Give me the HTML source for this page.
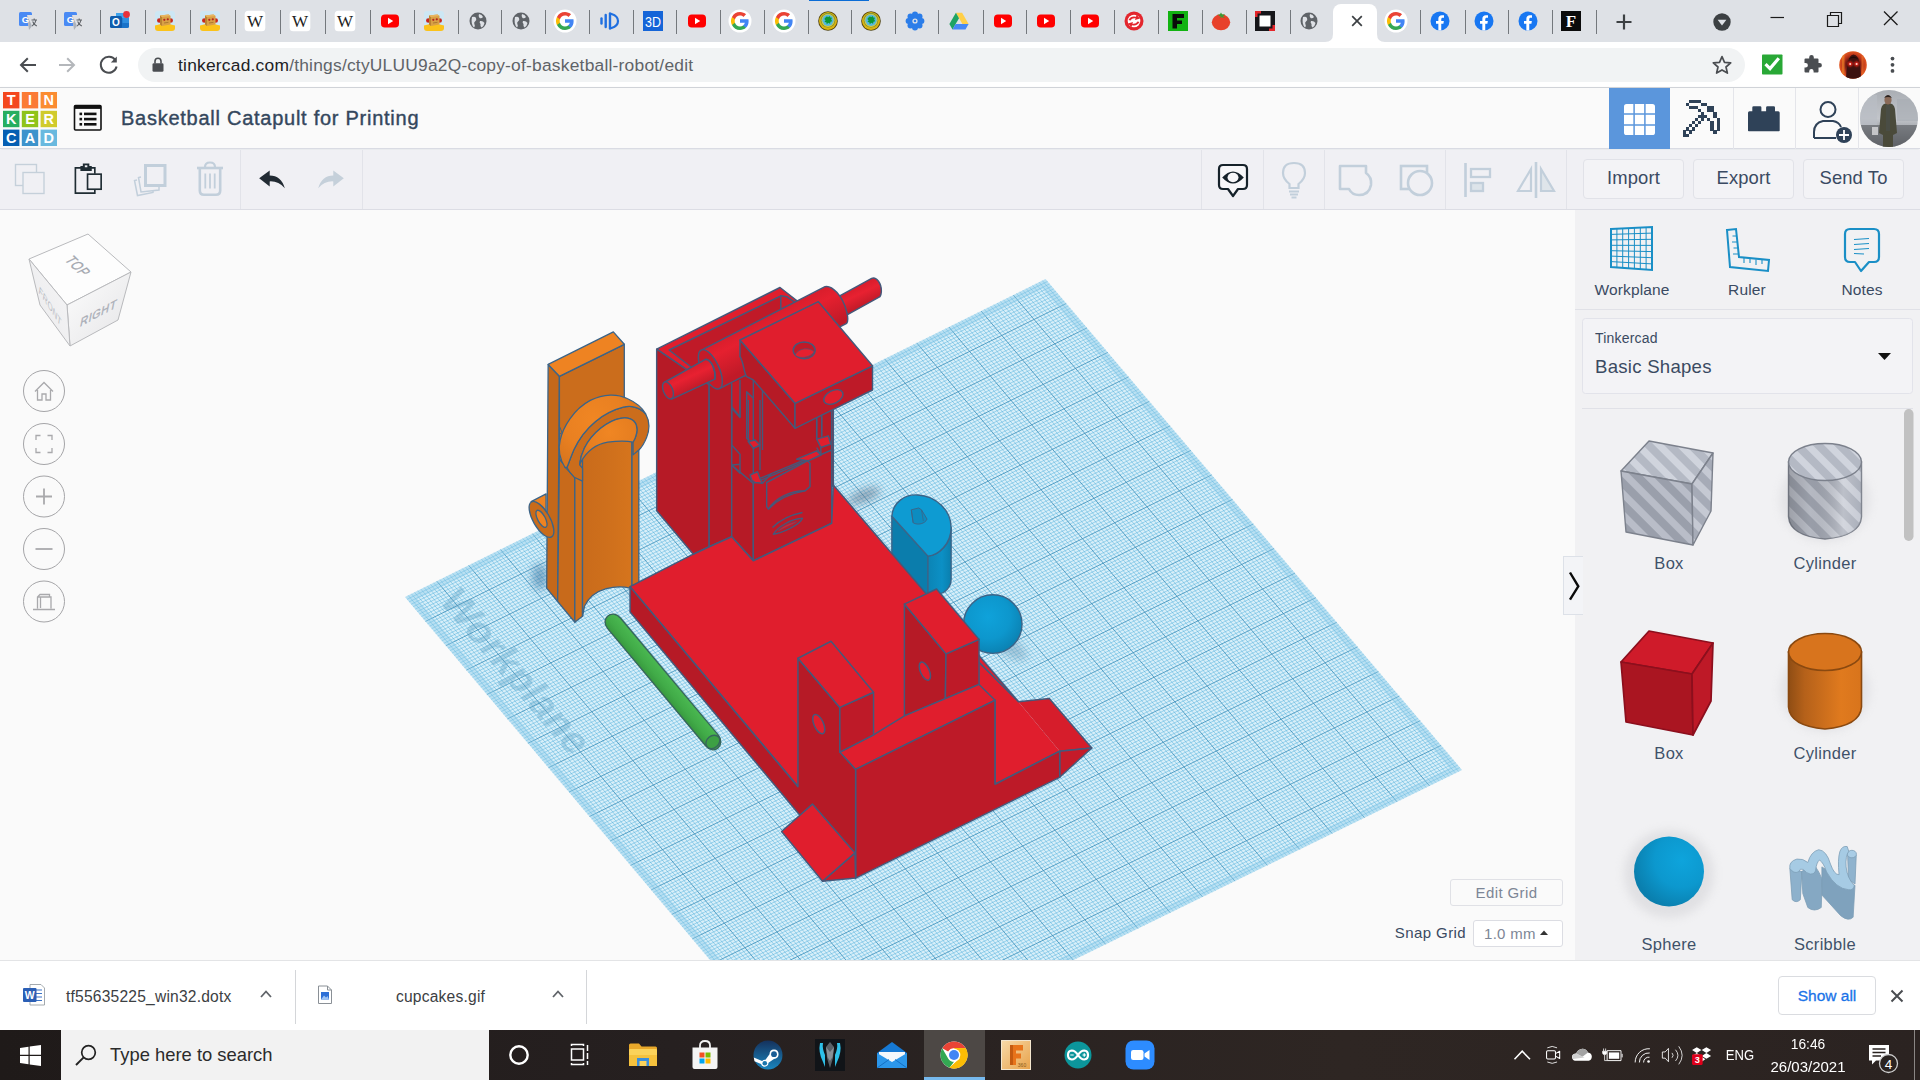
<!DOCTYPE html>
<html lang="en">
<head>
<meta charset="utf-8">
<title>Basketball Catapult for Printing | Tinkercad</title>
<style>
*{box-sizing:border-box;margin:0;padding:0}
html,body{width:1920px;height:1080px;overflow:hidden;background:#fff;font-family:"Liberation Sans",sans-serif}
.abs{position:absolute}
#root{position:relative;width:1920px;height:1080px;overflow:hidden}
/* ---------- chrome tab strip ---------- */
#tabs{left:0;top:0;width:1920px;height:42px;background:#dee1e6}
#tabs:before{content:"";position:absolute;left:809px;top:0;width:60px;height:1px;background:#0a6cd6}
.fav{position:absolute;top:11px;width:20px;height:20px}
.tsep{position:absolute;top:9.5px;width:1.2px;height:24px;background:#74787d}
#acttab{left:1333px;top:4px;width:44px;height:38px;background:#fff;border-radius:8px 8px 0 0}
/* ---------- chrome toolbar ---------- */
#nav{left:0;top:42px;width:1920px;height:46px;background:#fff;border-bottom:1px solid #d5d7db}
#omni{left:138px;top:5.5px;width:1607px;height:34px;border-radius:17px;background:#f1f3f4}
#url{left:40px;top:6px;font-size:17.4px;line-height:22px;color:#5f6368;white-space:nowrap;letter-spacing:.22px}
#url b{font-weight:400;color:#202124}
/* ---------- tinkercad header ---------- */
#tkh{left:0;top:88px;width:1920px;height:61px;background:#fafafa;border-bottom:1px solid #d9dbe3;box-shadow:0 1px 3px rgba(60,70,100,.18)}
#title{left:121px;top:17px;font-size:20px;line-height:26px;color:#34475d;white-space:nowrap;letter-spacing:.74px;-webkit-text-stroke:.4px #34475d}
.hsep{position:absolute;top:0;width:1px;height:61px;background:#e4e5ea}
/* ---------- tinkercad toolbar ---------- */
#tkt{left:0;top:150px;width:1920px;height:60px;background:#f0f0f4;border-bottom:1px solid #dcdde4}
.vsep{position:absolute;top:0;width:1px;height:59px;background:#e2e3e9}
.tbtn{position:absolute;top:9px;height:40px;width:101px;border:1px solid #e1e2e8;border-radius:4px;background:#f3f3f6;color:#3a4a62;font-size:18.4px;line-height:35px;text-align:center;letter-spacing:.12px}
/* ---------- canvas ---------- */
#canvas{left:0;top:210px;width:1575px;height:750px;background:#fafafa;overflow:hidden}
/* ---------- side panel ---------- */
#side{left:1575px;top:210px;width:345px;height:750px;background:#f1f1f3}
.lbl{position:absolute;width:140px;text-align:center;font-size:15.5px;line-height:20px;color:#3a4a62;letter-spacing:.15px}
.slbl{position:absolute;width:140px;text-align:center;font-size:16.5px;line-height:20px;color:#3f5169;letter-spacing:.3px}
/* ---------- downloads bar ---------- */
#dl{left:0;top:960px;width:1920px;height:70px;background:#fff;border-top:1px solid #e3e4e6}
.dlt{position:absolute;top:26px;font-size:15.6px;line-height:20px;color:#3c4043;white-space:nowrap;letter-spacing:.2px}
.dsep{position:absolute;top:9px;width:1px;height:54px;background:#d4d6d9}
/* ---------- taskbar ---------- */
#tb{left:0;top:1030px;width:1920px;height:50px;background:linear-gradient(90deg,#1f1a19 0%,#262020 35%,#2e2623 70%,#2b2321 100%)}
#search{left:61px;top:0;width:428px;height:50px;background:#f2f2f2}
#search span{position:absolute;left:49px;top:13px;font-size:18.4px;line-height:24px;color:#2b2b2b;white-space:nowrap}
.tray{position:absolute;color:#fff;font-size:15px;line-height:18px;white-space:nowrap;text-align:center}
</style>
</head>
<body>
<div id="root">

<!-- TABSTRIP -->
<div id="tabs" class="abs">
<div class="tsep" style="left:55.0px"></div>
<div class="tsep" style="left:100.0px"></div>
<div class="tsep" style="left:145.0px"></div>
<div class="tsep" style="left:190.0px"></div>
<div class="tsep" style="left:235.0px"></div>
<div class="tsep" style="left:280.0px"></div>
<div class="tsep" style="left:325.0px"></div>
<div class="tsep" style="left:370.0px"></div>
<div class="tsep" style="left:414.0px"></div>
<div class="tsep" style="left:458.0px"></div>
<div class="tsep" style="left:501.0px"></div>
<div class="tsep" style="left:545.0px"></div>
<div class="tsep" style="left:589.0px"></div>
<div class="tsep" style="left:633.0px"></div>
<div class="tsep" style="left:676.0px"></div>
<div class="tsep" style="left:720.0px"></div>
<div class="tsep" style="left:764.0px"></div>
<div class="tsep" style="left:808.0px"></div>
<div class="tsep" style="left:851.0px"></div>
<div class="tsep" style="left:895.0px"></div>
<div class="tsep" style="left:938.0px"></div>
<div class="tsep" style="left:982.5px"></div>
<div class="tsep" style="left:1026.0px"></div>
<div class="tsep" style="left:1070.0px"></div>
<div class="tsep" style="left:1114.0px"></div>
<div class="tsep" style="left:1158.0px"></div>
<div class="tsep" style="left:1201.5px"></div>
<div class="tsep" style="left:1245.5px"></div>
<div class="tsep" style="left:1289.5px"></div>
<div class="tsep" style="left:1420.0px"></div>
<div class="tsep" style="left:1464.5px"></div>
<div class="tsep" style="left:1508.0px"></div>
<div class="tsep" style="left:1551.5px"></div>
<div class="tsep" style="left:1595.5px"></div>
<div id="acttab" class="abs"></div>
<svg class="abs" style="left:1325px;top:34px" width="60" height="8" viewBox="0 0 60 8"><path d="M0,8 Q8,8 8,0 V8Z M60,8 Q52,8 52,0 V8Z" fill="#fff"/></svg>
<svg class="abs" style="left:1349px;top:13px" width="16" height="16" viewBox="0 0 16 16"><path d="M3.2,3.2 L12.8,12.8 M12.8,3.2 L3.2,12.8" stroke="#3c4043" stroke-width="1.7" fill="none"/></svg>
<svg class="abs" style="left:19.0px;top:11.0px" width="20" height="20" viewBox="0 0 20 20" overflow="visible"><rect x="0" y="1" width="13" height="14" rx="1.5" fill="#4a8af4"/><path d="M8,4 L19,4 Q20,4 20,5 L20,18 Q20,19 19,19 L10,19Z" fill="#dfe1e5"/><path d="M8,4 L13,15 L10,19Z" fill="#aeb3bb"/><text x="6.5" y="12" font-size="9.5" font-weight="700" font-family="Liberation Sans,sans-serif" fill="#fff" text-anchor="middle">G</text><path d="M12.5,9 H18 M15.2,7.5 V9 M13.2,15 Q16.5,12.5 17,9 M13.6,10.5 Q15,13.5 17.8,15" stroke="#5f6368" stroke-width="1.1" fill="none"/></svg>
<svg class="abs" style="left:64.0px;top:11.0px" width="20" height="20" viewBox="0 0 20 20" overflow="visible"><rect x="0" y="1" width="13" height="14" rx="1.5" fill="#4a8af4"/><path d="M8,4 L19,4 Q20,4 20,5 L20,18 Q20,19 19,19 L10,19Z" fill="#dfe1e5"/><path d="M8,4 L13,15 L10,19Z" fill="#aeb3bb"/><text x="6.5" y="12" font-size="9.5" font-weight="700" font-family="Liberation Sans,sans-serif" fill="#fff" text-anchor="middle">G</text><path d="M12.5,9 H18 M15.2,7.5 V9 M13.2,15 Q16.5,12.5 17,9 M13.6,10.5 Q15,13.5 17.8,15" stroke="#5f6368" stroke-width="1.1" fill="none"/></svg>
<svg class="abs" style="left:110.0px;top:11.0px" width="20" height="20" viewBox="0 0 20 20" overflow="visible"><rect x="6" y="2" width="13" height="15" rx="1.5" fill="#1a73c9"/><rect x="6" y="2" width="13" height="5" fill="#3fa3ec"/><rect x="12.5" y="7" width="6.5" height="5" fill="#2f8fe0"/><rect x="0" y="5" width="12" height="12" rx="1.5" fill="#0f5cad"/><text x="6" y="14.6" font-size="10" font-weight="700" font-family="Liberation Sans,sans-serif" fill="#fff" text-anchor="middle">O</text><circle cx="16.5" cy="3.5" r="3.4" fill="#e8303a"/></svg>
<svg class="abs" style="left:155.0px;top:11.0px" width="20" height="20" viewBox="0 0 20 20" overflow="visible"><rect x="0" y="0" width="20" height="20" rx="3" fill="#cde7f4"/><path d="M0,14.500 Q10,11 20,14.500 V17 Q20,20 17,20 H3 Q0,20 0,17Z" fill="#fbc21a"/><circle cx="4.300" cy="9.500" r="2.300" fill="#c8281e"/><circle cx="15.700" cy="9.500" r="2.300" fill="#c8281e"/><path d="M5,4.500 L13.500,3.500 L15.500,5 L15.500,13.500 L7,15 L5,13.500Z" fill="#d9a046"/><path d="M5,4.500 L7,6 L7,15 L5,13.500Z" fill="#b98232"/><path d="M5,4.500 L13.500,3.500 L15.500,5 L7,6Z" fill="#e8b660"/><circle cx="9.300" cy="8.800" r="1.100" fill="#b3261e"/><circle cx="12.800" cy="8.300" r="1.100" fill="#b3261e"/><path d="M9,12 L13.500,11.300" stroke="#9a6a28" stroke-width=".7"/></svg>
<svg class="abs" style="left:200.0px;top:11.0px" width="20" height="20" viewBox="0 0 20 20" overflow="visible"><rect x="0" y="0" width="20" height="20" rx="3" fill="#cde7f4"/><path d="M0,14.500 Q10,11 20,14.500 V17 Q20,20 17,20 H3 Q0,20 0,17Z" fill="#fbc21a"/><circle cx="4.300" cy="9.500" r="2.300" fill="#c8281e"/><circle cx="15.700" cy="9.500" r="2.300" fill="#c8281e"/><path d="M5,4.500 L13.500,3.500 L15.500,5 L15.500,13.500 L7,15 L5,13.500Z" fill="#d9a046"/><path d="M5,4.500 L7,6 L7,15 L5,13.500Z" fill="#b98232"/><path d="M5,4.500 L13.500,3.500 L15.500,5 L7,6Z" fill="#e8b660"/><circle cx="9.300" cy="8.800" r="1.100" fill="#b3261e"/><circle cx="12.800" cy="8.300" r="1.100" fill="#b3261e"/><path d="M9,12 L13.500,11.300" stroke="#9a6a28" stroke-width=".7"/></svg>
<svg class="abs" style="left:245.0px;top:11.0px" width="20" height="20" viewBox="0 0 20 20" overflow="visible"><rect x="-.3" y="-.3" width="20.600" height="20.600" rx="3.500" fill="#fff"/><text x="10" y="16" font-size="17" font-family="Liberation Serif,serif" fill="#222" text-anchor="middle">W</text></svg>
<svg class="abs" style="left:290.0px;top:11.0px" width="20" height="20" viewBox="0 0 20 20" overflow="visible"><rect x="-.3" y="-.3" width="20.600" height="20.600" rx="3.500" fill="#fff"/><text x="10" y="16" font-size="17" font-family="Liberation Serif,serif" fill="#222" text-anchor="middle">W</text></svg>
<svg class="abs" style="left:334.5px;top:11.0px" width="20" height="20" viewBox="0 0 20 20" overflow="visible"><rect x="-.3" y="-.3" width="20.600" height="20.600" rx="3.500" fill="#fff"/><text x="10" y="16" font-size="17" font-family="Liberation Serif,serif" fill="#222" text-anchor="middle">W</text></svg>
<svg class="abs" style="left:380.0px;top:11.0px" width="20" height="20" viewBox="0 0 20 20" overflow="visible"><rect x="1" y="3.5" width="18" height="13" rx="3.8" fill="#f00"/><path d="M8,6.8 L13.2,10 L8,13.2Z" fill="#fff"/></svg>
<svg class="abs" style="left:424.0px;top:11.0px" width="20" height="20" viewBox="0 0 20 20" overflow="visible"><rect x="0" y="0" width="20" height="20" rx="3" fill="#cde7f4"/><path d="M0,14.500 Q10,11 20,14.500 V17 Q20,20 17,20 H3 Q0,20 0,17Z" fill="#fbc21a"/><circle cx="4.300" cy="9.500" r="2.300" fill="#c8281e"/><circle cx="15.700" cy="9.500" r="2.300" fill="#c8281e"/><path d="M5,4.500 L13.500,3.500 L15.500,5 L15.500,13.500 L7,15 L5,13.500Z" fill="#d9a046"/><path d="M5,4.500 L7,6 L7,15 L5,13.500Z" fill="#b98232"/><path d="M5,4.500 L13.500,3.500 L15.500,5 L7,6Z" fill="#e8b660"/><circle cx="9.300" cy="8.800" r="1.100" fill="#b3261e"/><circle cx="12.800" cy="8.300" r="1.100" fill="#b3261e"/><path d="M9,12 L13.500,11.300" stroke="#9a6a28" stroke-width=".7"/></svg>
<svg class="abs" style="left:468.0px;top:11.0px" width="20" height="20" viewBox="0 0 20 20" overflow="visible"><circle cx="10" cy="10" r="8.5" fill="#5f6368"/><path d="M4,6 Q7,5 8,7 Q9,9 7,10.5 Q5.5,11.5 6.5,13.5 Q7.5,15 6,16.5 Q2.5,13 4,6Z M11,3 Q14,3.5 15,6 Q13.5,8 11.5,7 Q10,5 11,3Z M12,10 Q15,9.5 16.5,12 Q16,15 13.5,16.5 Q12,15 12.5,13 Q11,11.5 12,10Z" fill="#dee1e6"/></svg>
<svg class="abs" style="left:511.0px;top:11.0px" width="20" height="20" viewBox="0 0 20 20" overflow="visible"><circle cx="10" cy="10" r="8.5" fill="#5f6368"/><path d="M4,6 Q7,5 8,7 Q9,9 7,10.5 Q5.5,11.5 6.5,13.5 Q7.5,15 6,16.5 Q2.5,13 4,6Z M11,3 Q14,3.5 15,6 Q13.5,8 11.5,7 Q10,5 11,3Z M12,10 Q15,9.5 16.5,12 Q16,15 13.5,16.5 Q12,15 12.5,13 Q11,11.5 12,10Z" fill="#dee1e6"/></svg>
<svg class="abs" style="left:555.0px;top:11.0px" width="20" height="20" viewBox="0 0 20 20" overflow="visible"><circle cx="10" cy="10" r="11.500" fill="#fff"/><path d="M18.6,10.2 c0,-.65 -.06,-1.25 -.17,-1.85 H10 v3.5 h4.84 a4.14,4.14 0 0 1 -1.8,2.72 v2.26 h2.9 c1.7,-1.57 2.68,-3.87 2.68,-6.63z" fill="#4285f4"/><path d="M10,19 c2.43,0 4.47,-.8 5.96,-2.18 l-2.9,-2.26 c-.8,.54 -1.84,.86 -3.06,.86 -2.34,0 -4.33,-1.58 -5.04,-3.7 H1.96 v2.33 A9,9 0 0 0 10,19z" fill="#34a853"/><path d="M4.96,11.71 a5.41,5.41 0 0 1 0,-3.42 V5.96 H1.96 a9,9 0 0 0 0,8.08 l3,-2.33z" fill="#fbbc05"/><path d="M10,4.58 c1.32,0 2.5,.45 3.44,1.35 l2.58,-2.58 C14.46,1.89 12.43,1 10,1 A9,9 0 0 0 1.96,5.96 l3,2.33 C5.67,6.16 7.66,4.58 10,4.58z" fill="#ea4335"/></svg>
<svg class="abs" style="left:598.5px;top:11.0px" width="20" height="20" viewBox="0 0 20 20" overflow="visible"><g stroke="#1f6fe0" stroke-linecap="round" fill="none"><path d="M2.5,7.5 V12.5" stroke-width="2.4"/><path d="M6.7,4 V16" stroke-width="2.4"/><path d="M11,2.5 V17.5" stroke-width="2.4"/><path d="M12.5,3 Q19,5 19,10 Q19,15 12.5,17" stroke-width="2.2"/></g></svg>
<svg class="abs" style="left:642.5px;top:11.0px" width="20" height="20" viewBox="0 0 20 20" overflow="visible"><rect x="0" y="0" width="20" height="20" fill="#1565d8"/><text x="10" y="15.6" font-size="14.5" font-family="Liberation Sans,sans-serif" fill="#fff" text-anchor="middle" textLength="16" lengthAdjust="spacingAndGlyphs">3D</text></svg>
<svg class="abs" style="left:686.5px;top:11.0px" width="20" height="20" viewBox="0 0 20 20" overflow="visible"><rect x="1" y="3.5" width="18" height="13" rx="3.8" fill="#f00"/><path d="M8,6.8 L13.2,10 L8,13.2Z" fill="#fff"/></svg>
<svg class="abs" style="left:730.0px;top:11.0px" width="20" height="20" viewBox="0 0 20 20" overflow="visible"><circle cx="10" cy="10" r="11.500" fill="#fff"/><path d="M18.6,10.2 c0,-.65 -.06,-1.25 -.17,-1.85 H10 v3.5 h4.84 a4.14,4.14 0 0 1 -1.8,2.72 v2.26 h2.9 c1.7,-1.57 2.68,-3.87 2.68,-6.63z" fill="#4285f4"/><path d="M10,19 c2.43,0 4.47,-.8 5.96,-2.18 l-2.9,-2.26 c-.8,.54 -1.84,.86 -3.06,.86 -2.34,0 -4.33,-1.58 -5.04,-3.7 H1.96 v2.33 A9,9 0 0 0 10,19z" fill="#34a853"/><path d="M4.96,11.71 a5.41,5.41 0 0 1 0,-3.42 V5.96 H1.96 a9,9 0 0 0 0,8.08 l3,-2.33z" fill="#fbbc05"/><path d="M10,4.58 c1.32,0 2.5,.45 3.44,1.35 l2.58,-2.58 C14.46,1.89 12.43,1 10,1 A9,9 0 0 0 1.96,5.96 l3,2.33 C5.67,6.16 7.66,4.58 10,4.58z" fill="#ea4335"/></svg>
<svg class="abs" style="left:774.0px;top:11.0px" width="20" height="20" viewBox="0 0 20 20" overflow="visible"><circle cx="10" cy="10" r="11.500" fill="#fff"/><path d="M18.6,10.2 c0,-.65 -.06,-1.25 -.17,-1.85 H10 v3.5 h4.84 a4.14,4.14 0 0 1 -1.8,2.72 v2.26 h2.9 c1.7,-1.57 2.68,-3.87 2.68,-6.63z" fill="#4285f4"/><path d="M10,19 c2.43,0 4.47,-.8 5.96,-2.18 l-2.9,-2.26 c-.8,.54 -1.84,.86 -3.06,.86 -2.34,0 -4.33,-1.58 -5.04,-3.7 H1.96 v2.33 A9,9 0 0 0 10,19z" fill="#34a853"/><path d="M4.96,11.71 a5.41,5.41 0 0 1 0,-3.42 V5.96 H1.96 a9,9 0 0 0 0,8.08 l3,-2.33z" fill="#fbbc05"/><path d="M10,4.58 c1.32,0 2.5,.45 3.44,1.35 l2.58,-2.58 C14.46,1.89 12.43,1 10,1 A9,9 0 0 0 1.96,5.96 l3,2.33 C5.67,6.16 7.66,4.58 10,4.58z" fill="#ea4335"/></svg>
<svg class="abs" style="left:817.5px;top:11.0px" width="20" height="20" viewBox="0 0 20 20" overflow="visible"><circle cx="10" cy="10" r="9.800" fill="#4e4210"/><circle cx="10" cy="10" r="9" fill="#dbb30f"/><circle cx="10" cy="9.300" r="7.300" fill="#6f8f3a"/><circle cx="10" cy="9.300" r="6.600" fill="#e3c93a"/><circle cx="10" cy="9.300" r="5.700" fill="#55b9dd"/><path d="M7.500,6.500 L9,5.200 L10,6.300 L11.500,5 L12.300,6.600 L14,6.800 L13.200,8.500 L14.200,10.200 L12.500,10.800 L12,12.800 L10.300,11.800 L8.800,13.200 L8.300,11.200 L6.500,11 L7.600,9.300 L6.300,8Z" fill="#0a9638"/></svg>
<svg class="abs" style="left:861.0px;top:11.0px" width="20" height="20" viewBox="0 0 20 20" overflow="visible"><circle cx="10" cy="10" r="9.800" fill="#4e4210"/><circle cx="10" cy="10" r="9" fill="#dbb30f"/><circle cx="10" cy="9.300" r="7.300" fill="#6f8f3a"/><circle cx="10" cy="9.300" r="6.600" fill="#e3c93a"/><circle cx="10" cy="9.300" r="5.700" fill="#55b9dd"/><path d="M7.500,6.500 L9,5.200 L10,6.300 L11.500,5 L12.300,6.600 L14,6.800 L13.200,8.500 L14.200,10.200 L12.500,10.800 L12,12.800 L10.300,11.800 L8.800,13.200 L8.300,11.200 L6.500,11 L7.600,9.300 L6.300,8Z" fill="#0a9638"/></svg>
<svg class="abs" style="left:905.0px;top:11.0px" width="20" height="20" viewBox="0 0 20 20" overflow="visible"><g fill="#2b7de9"><circle cx="10" cy="3.6" r="3"/><circle cx="10" cy="16.4" r="3"/><circle cx="3.6" cy="10" r="3"/><circle cx="16.4" cy="10" r="3"/><circle cx="5.5" cy="5.5" r="3"/><circle cx="14.5" cy="5.5" r="3"/><circle cx="5.5" cy="14.5" r="3"/><circle cx="14.5" cy="14.5" r="3"/><circle cx="10" cy="10" r="5"/></g><circle cx="10" cy="10" r="2.6" fill="#dee1e6"/><circle cx="10" cy="10" r="1.3" fill="#2b7de9"/></svg>
<svg class="abs" style="left:949.0px;top:11.0px" width="20" height="20" viewBox="0 0 20 20" overflow="visible"><path d="M6.9,1.8 H13.1 L19.6,13 H13.4Z" fill="#ffcf48"/><path d="M6.9,1.8 L10,7.2 L3.5,18.4 L0.4,13Z" fill="#1ea362"/><path d="M6.6,13 H19.6 L16.5,18.4 H3.5Z" fill="#4688f4"/></svg>
<svg class="abs" style="left:993.0px;top:11.0px" width="20" height="20" viewBox="0 0 20 20" overflow="visible"><rect x="1" y="3.5" width="18" height="13" rx="3.8" fill="#f00"/><path d="M8,6.8 L13.2,10 L8,13.2Z" fill="#fff"/></svg>
<svg class="abs" style="left:1036.0px;top:11.0px" width="20" height="20" viewBox="0 0 20 20" overflow="visible"><rect x="1" y="3.5" width="18" height="13" rx="3.8" fill="#f00"/><path d="M8,6.8 L13.2,10 L8,13.2Z" fill="#fff"/></svg>
<svg class="abs" style="left:1080.0px;top:11.0px" width="20" height="20" viewBox="0 0 20 20" overflow="visible"><rect x="1" y="3.5" width="18" height="13" rx="3.8" fill="#f00"/><path d="M8,6.8 L13.2,10 L8,13.2Z" fill="#fff"/></svg>
<svg class="abs" style="left:1124.0px;top:11.0px" width="20" height="20" viewBox="0 0 20 20" overflow="visible"><circle cx="10" cy="10" r="9.5" fill="#e3262e"/><circle cx="10" cy="10" r="6.3" fill="#fff"/><path d="M4.5,9 Q7,4.5 12,5.8 L12.5,3.8 L16,7.6 L11,9 L11.6,7.3 Q8,6.6 6.5,9.6Z M15.5,11 Q13,15.5 8,14.2 L7.5,16.2 L4,12.4 L9,11 L8.4,12.7 Q12,13.4 13.5,10.4Z" fill="#e3262e"/></svg>
<svg class="abs" style="left:1168.0px;top:11.0px" width="20" height="20" viewBox="0 0 20 20" overflow="visible"><rect x="0" y="0" width="20" height="20" fill="#12b312"/><path d="M4.5,3 H16 V7 H9 V9.5 H14 V13 H9 V17.5 H4.5Z" fill="#0a0a0a"/></svg>
<svg class="abs" style="left:1211.0px;top:11.0px" width="20" height="20" viewBox="0 0 20 20" overflow="visible"><ellipse cx="10" cy="11.3" rx="9.2" ry="8" fill="#e8402a"/><path d="M10,5.8 L6.5,3.8 L8.8,3.6 L10,1.5 L11.2,3.6 L14,3.2 L12,5.5 L14.5,7 L10.5,6.2 L8,7.5Z" fill="#3c9b35"/></svg>
<svg class="abs" style="left:1254.5px;top:11.0px" width="20" height="20" viewBox="0 0 20 20" overflow="visible"><rect x="0" y="0" width="20" height="20" fill="#16161a"/><rect x="4.5" y="4.5" width="11" height="11" fill="#fff"/><path d="M0,0 H6 V2.5 H2.5 V6 H0Z M20,20 H14 V17.5 H17.5 V14 H20Z" fill="#e5252a"/><path d="M14,0 H20 V6 H17.5 V2.5 H14Z" fill="#e5252a" opacity=".0"/></svg>
<svg class="abs" style="left:1298.5px;top:11.0px" width="20" height="20" viewBox="0 0 20 20" overflow="visible"><circle cx="10" cy="10" r="8.5" fill="#5f6368"/><path d="M4,6 Q7,5 8,7 Q9,9 7,10.5 Q5.5,11.5 6.5,13.5 Q7.5,15 6,16.5 Q2.5,13 4,6Z M11,3 Q14,3.5 15,6 Q13.5,8 11.5,7 Q10,5 11,3Z M12,10 Q15,9.5 16.5,12 Q16,15 13.5,16.5 Q12,15 12.5,13 Q11,11.5 12,10Z" fill="#dee1e6"/></svg>
<svg class="abs" style="left:1386.0px;top:11.0px" width="20" height="20" viewBox="0 0 20 20" overflow="visible"><circle cx="10" cy="10" r="11.500" fill="#fff"/><path d="M18.6,10.2 c0,-.65 -.06,-1.25 -.17,-1.85 H10 v3.5 h4.84 a4.14,4.14 0 0 1 -1.8,2.72 v2.26 h2.9 c1.7,-1.57 2.68,-3.87 2.68,-6.63z" fill="#4285f4"/><path d="M10,19 c2.43,0 4.47,-.8 5.96,-2.18 l-2.9,-2.26 c-.8,.54 -1.84,.86 -3.06,.86 -2.34,0 -4.33,-1.58 -5.04,-3.7 H1.96 v2.33 A9,9 0 0 0 10,19z" fill="#34a853"/><path d="M4.96,11.71 a5.41,5.41 0 0 1 0,-3.42 V5.96 H1.96 a9,9 0 0 0 0,8.08 l3,-2.33z" fill="#fbbc05"/><path d="M10,4.58 c1.32,0 2.5,.45 3.44,1.35 l2.58,-2.58 C14.46,1.89 12.43,1 10,1 A9,9 0 0 0 1.96,5.96 l3,2.33 C5.67,6.16 7.66,4.58 10,4.58z" fill="#ea4335"/></svg>
<svg class="abs" style="left:1430.0px;top:11.0px" width="20" height="20" viewBox="0 0 20 20" overflow="visible"><circle cx="10" cy="10" r="9.5" fill="#1877f2"/><path d="M13.4,12.7 L13.85,10 H11.25 V8.2 c0,-.78 .38,-1.5 1.56,-1.5 H14 V4.35 s-1.07,-.2 -2.1,-.2 c-2.15,0 -3.55,1.3 -3.55,3.66 V10 H6 v2.7 h2.35 v6.7 a9.6,9.6 0 0 0 2.9,0 V12.7z" fill="#fff"/></svg>
<svg class="abs" style="left:1474.0px;top:11.0px" width="20" height="20" viewBox="0 0 20 20" overflow="visible"><circle cx="10" cy="10" r="9.5" fill="#1877f2"/><path d="M13.4,12.7 L13.85,10 H11.25 V8.2 c0,-.78 .38,-1.5 1.56,-1.5 H14 V4.35 s-1.07,-.2 -2.1,-.2 c-2.15,0 -3.55,1.3 -3.55,3.66 V10 H6 v2.7 h2.35 v6.7 a9.6,9.6 0 0 0 2.9,0 V12.7z" fill="#fff"/></svg>
<svg class="abs" style="left:1517.5px;top:11.0px" width="20" height="20" viewBox="0 0 20 20" overflow="visible"><circle cx="10" cy="10" r="9.5" fill="#1877f2"/><path d="M13.4,12.7 L13.85,10 H11.25 V8.2 c0,-.78 .38,-1.5 1.56,-1.5 H14 V4.35 s-1.07,-.2 -2.1,-.2 c-2.15,0 -3.55,1.3 -3.55,3.66 V10 H6 v2.7 h2.35 v6.7 a9.6,9.6 0 0 0 2.9,0 V12.7z" fill="#fff"/></svg>
<svg class="abs" style="left:1561.0px;top:11.0px" width="20" height="20" viewBox="0 0 20 20" overflow="visible"><rect x="0" y="0" width="20" height="20" fill="#0b0b0b"/><text x="10" y="16.2" font-size="17" font-weight="700" font-family="Liberation Serif,serif" fill="#fff" text-anchor="middle">F</text></svg>
<svg class="abs" style="left:1614px;top:12px" width="20" height="20" viewBox="0 0 20 20"><path d="M10,2.5 V17.5 M2.5,10 H17.5" stroke="#3c4043" stroke-width="2.2" fill="none"/></svg>
<svg class="abs" style="left:1712px;top:12px" width="20" height="20" viewBox="0 0 20 20"><circle cx="10" cy="10" r="8.7" fill="#3c4043"/><path d="M5.6,7.8 H14.4 L10,13.4Z" fill="#dee1e6"/></svg>
<svg class="abs" style="left:1760px;top:0" width="160" height="42" viewBox="0 0 160 42"><path d="M10.5,17.5 H24" stroke="#1b1b1b" stroke-width="1.2"/><path d="M67.5,15.5 H78.5 V26.5 H67.5Z M70.5,15.5 V12.5 H81.5 V23.5 H78.5" stroke="#1b1b1b" stroke-width="1.2" fill="none"/><path d="M124,11.5 L137.5,25 M137.5,11.5 L124,25" stroke="#1b1b1b" stroke-width="1.3" fill="none"/></svg>
</div>

<!-- NAVBAR -->
<div id="nav" class="abs">
<!-- back -->
<svg class="abs" style="left:17px;top:12px" width="22" height="22" viewBox="0 0 22 22"><path d="M19,11 H4.5 M10.8,4.2 L4,11 L10.8,17.8" stroke="#4a4d51" stroke-width="2" fill="none"/></svg>
<svg class="abs" style="left:56px;top:12px" width="22" height="22" viewBox="0 0 22 22"><path d="M3,11 H17.5 M11.2,4.2 L18,11 L11.2,17.8" stroke="#b4b7bb" stroke-width="2" fill="none"/></svg>
<svg class="abs" style="left:97px;top:11px" width="24" height="24" viewBox="0 0 24 24"><path d="M18.4,7.2 A8,8 0 1 0 19.6,13.6" stroke="#4a4d51" stroke-width="2" fill="none"/><path d="M19.8,3.6 V9.6 H13.8Z" fill="#4a4d51"/></svg>
<div id="omni" class="abs">
<svg class="abs" style="left:13px;top:9px" width="14" height="16" viewBox="0 0 14 16"><rect x="1.5" y="6.2" width="11" height="8.6" rx="1.3" fill="#4a4d51"/><path d="M4,6.5 V4.3 a3,3 0 0 1 6,0 V6.5" stroke="#4a4d51" stroke-width="1.6" fill="none"/></svg>
<div id="url" class="abs"><b>tinkercad.com</b>/things/ctyULUU9a2Q-copy-of-basketball-robot/edit</div>
<svg class="abs" style="left:1573px;top:6px" width="22" height="22" viewBox="0 0 22 22"><path d="M11,2.6 L13.5,8.3 L19.7,8.9 L15,13 L16.4,19.1 L11,15.9 L5.6,19.1 L7,13 L2.3,8.9 L8.5,8.3Z" stroke="#4a4d51" stroke-width="1.7" fill="none" stroke-linejoin="round"/></svg>
</div>
<!-- ext: green check -->
<svg class="abs" style="left:1761px;top:11px" width="22" height="22" viewBox="0 0 22 22"><rect x="1" y="1.500" width="20.500" height="20" rx=".8" fill="#29a836"/><path d="M4.5,11.2 L9,15.6 L17.8,5.2" stroke="#fff" stroke-width="3.2" fill="none"/></svg>
<!-- puzzle -->
<svg class="abs" style="left:1801px;top:11px" width="22" height="22" viewBox="0 0 22 22"><path d="M8.2,4.2 a2.3,2.3 0 0 1 4.6,0 V5.5 H16.5 a1,1 0 0 1 1,1 V10 H18.6 a2.3,2.3 0 0 1 0,4.6 H17.5 V18.5 a1,1 0 0 1 -1,1 H12.6 V18.3 a2.2,2.2 0 0 0 -4.4,0 V19.5 H4.5 a1,1 0 0 1 -1,-1 V14.6 H4.6 a2.3,2.3 0 0 0 0,-4.6 H3.5 V6.5 a1,1 0 0 1 1,-1 H8.2Z" fill="#4a4d51"/></svg>
<!-- avatar -->
<svg class="abs" style="left:1839px;top:9px" width="28" height="28" viewBox="0 0 28 28"><defs><radialGradient id="avg" cx=".5" cy=".5" r=".5"><stop offset="0" stop-color="#3a0f0d"/><stop offset=".45" stop-color="#5e1712"/><stop offset=".7" stop-color="#b8321a"/><stop offset="1" stop-color="#e65a22"/></radialGradient><clipPath id="avc0"><circle cx="14" cy="14" r="13.800"/></clipPath><filter id="glow" x="-100%" y="-100%" width="300%" height="300%"><feGaussianBlur stdDeviation="1.100"/></filter></defs><g clip-path="url(#avc0)"><rect width="28" height="28" fill="url(#avg)"/><rect x="3" y="3" width="2.500" height="20" fill="#f08a2a" opacity=".6"/><rect x="22.500" y="5" width="2" height="18" fill="#f07a2a" opacity=".5"/><path d="M7,28 Q7,19 9,12 Q10,4 14.500,3.500 Q19.500,4 20.500,12 Q22,19 22,28Z" fill="#3c1210"/><path d="M9.500,8 Q14.500,3 19.500,8 Q14.500,6 9.500,8Z" fill="#1f0a09"/><g filter="url(#glow)"><circle cx="11.200" cy="13" r="2.400" fill="#ff2418"/><circle cx="17.600" cy="13" r="2.400" fill="#ff2418"/></g><circle cx="11.200" cy="13" r="1" fill="#ffd8d0"/><circle cx="17.600" cy="13" r="1" fill="#ffd8d0"/></g></svg>
<svg class="abs" style="left:1887px;top:11px" width="10" height="22" viewBox="0 0 10 22"><circle cx="5.500" cy="5.600" r="1.900" fill="#4a4d51"/><circle cx="5.500" cy="11.800" r="1.900" fill="#4a4d51"/><circle cx="5.500" cy="17.900" r="1.900" fill="#4a4d51"/></svg>

</div>

<!-- TINKERCAD HEADER -->
<div id="tkh" class="abs">
<!-- logo -->
<svg class="abs" style="left:3px;top:4px" width="54" height="54" viewBox="0 0 54 54" font-family="Liberation Sans,sans-serif" font-weight="700" font-size="14.5" text-anchor="middle" fill="#fff">
<rect x="0" y="0" width="16.4" height="16.4" fill="#f4481f"/><rect x="18.8" y="0" width="16.4" height="16.4" fill="#fb7a35"/><rect x="37.6" y="0" width="16.4" height="16.4" fill="#fb8c31"/>
<rect x="0" y="18.8" width="16.4" height="16.4" fill="#26ae60"/><rect x="18.8" y="18.8" width="16.4" height="16.4" fill="#8fc31a"/><rect x="37.6" y="18.8" width="16.4" height="16.4" fill="#d0cb2c"/>
<rect x="0" y="37.6" width="16.4" height="16.4" fill="#065fb3"/><rect x="18.8" y="37.6" width="16.4" height="16.4" fill="#3d93cc"/><rect x="37.6" y="37.6" width="16.4" height="16.4" fill="#69b9df"/>
<text x="8.2" y="13.4">T</text><text x="27" y="13.4">I</text><text x="45.8" y="13.4">N</text>
<text x="8.2" y="32.2">K</text><text x="27" y="32.2">E</text><text x="45.8" y="32.2">R</text>
<text x="8.2" y="51">C</text><text x="27" y="51">A</text><text x="45.8" y="51">D</text>
</svg>
<!-- menu/list icon -->
<svg class="abs" style="left:73px;top:16px" width="30" height="28" viewBox="0 0 30 28"><rect x="1.5" y="1.5" width="26.5" height="24.5" rx="1" fill="none" stroke="#111" stroke-width="1.6"/><rect x="1.5" y="1.5" width="26.5" height="3.4" fill="#111"/><rect x="6.5" y="8.6" width="2.6" height="2.6" fill="#111"/><rect x="11" y="8.6" width="12.5" height="2.6" fill="#111"/><rect x="6.5" y="13.8" width="2.6" height="2.6" fill="#111"/><rect x="11" y="13.8" width="12.5" height="2.6" fill="#111"/><rect x="6.5" y="19" width="2.6" height="2.6" fill="#111"/><rect x="11" y="19" width="12.5" height="2.6" fill="#111"/></svg>
<div id="title" class="abs">Basketball Catapult for Printing</div>
<!-- right buttons -->
<div class="abs" style="left:1609px;top:0;width:61px;height:61px;background:#5b96dc"></div>
<svg class="abs" style="left:1624px;top:15.500px" width="31" height="31" viewBox="0 0 31 31"><rect x="0" y="0" width="31" height="31" rx="2.600" fill="#fff"/><path d="M10.100,0 V31 M20.900,0 V31 M0,10.100 H31 M0,20.900 H31" stroke="#5b96dc" stroke-width="1.500"/></svg>
<div class="hsep" style="left:1733px"></div><div class="hsep" style="left:1795px"></div><div class="hsep" style="left:1858px"></div>
<!-- pickaxe -->
<svg class="abs" style="left:1683.2px;top:12.2px" width="38" height="38" viewBox="0 0 38 38" fill="#2f4258" shape-rendering="crispEdges"><rect x="6.09" y="0.00" width="3.10" height="3.10"/><rect x="9.14" y="0.00" width="3.10" height="3.10"/><rect x="12.19" y="0.00" width="3.10" height="3.10"/><rect x="15.24" y="0.00" width="3.10" height="3.10"/><rect x="3.05" y="3.05" width="3.10" height="3.10"/><rect x="18.28" y="3.05" width="3.10" height="3.10"/><rect x="21.33" y="3.05" width="3.10" height="3.10"/><rect x="6.09" y="6.09" width="3.10" height="3.10"/><rect x="9.14" y="6.09" width="3.10" height="3.10"/><rect x="12.19" y="6.09" width="3.10" height="3.10"/><rect x="24.38" y="6.09" width="3.10" height="3.10"/><rect x="27.42" y="6.09" width="3.10" height="3.10"/><rect x="15.24" y="9.14" width="3.10" height="3.10"/><rect x="24.38" y="9.14" width="3.10" height="3.10"/><rect x="27.42" y="9.14" width="3.10" height="3.10"/><rect x="18.28" y="12.19" width="3.10" height="3.10"/><rect x="30.47" y="12.19" width="3.10" height="3.10"/><rect x="15.24" y="15.24" width="3.10" height="3.10"/><rect x="18.28" y="15.24" width="3.10" height="3.10"/><rect x="21.33" y="15.24" width="3.10" height="3.10"/><rect x="30.47" y="15.24" width="3.10" height="3.10"/><rect x="12.19" y="18.28" width="3.10" height="3.10"/><rect x="18.28" y="18.28" width="3.10" height="3.10"/><rect x="24.38" y="18.28" width="3.10" height="3.10"/><rect x="33.52" y="18.28" width="3.10" height="3.10"/><rect x="9.14" y="21.33" width="3.10" height="3.10"/><rect x="15.24" y="21.33" width="3.10" height="3.10"/><rect x="27.42" y="21.33" width="3.10" height="3.10"/><rect x="33.52" y="21.33" width="3.10" height="3.10"/><rect x="6.09" y="24.38" width="3.10" height="3.10"/><rect x="12.19" y="24.38" width="3.10" height="3.10"/><rect x="27.42" y="24.38" width="3.10" height="3.10"/><rect x="33.52" y="24.38" width="3.10" height="3.10"/><rect x="3.05" y="27.42" width="3.10" height="3.10"/><rect x="9.14" y="27.42" width="3.10" height="3.10"/><rect x="27.42" y="27.42" width="3.10" height="3.10"/><rect x="33.52" y="27.42" width="3.10" height="3.10"/><rect x="0.00" y="30.47" width="3.10" height="3.10"/><rect x="6.09" y="30.47" width="3.10" height="3.10"/><rect x="30.47" y="30.47" width="3.10" height="3.10"/><rect x="0.00" y="33.52" width="3.10" height="3.10"/><rect x="3.05" y="33.52" width="3.10" height="3.10"/></svg>
<!-- bricks -->
<svg class="abs" style="left:1746px;top:17px" width="36" height="28" viewBox="0 0 36 28"><path d="M2,7.800 Q2,6.300 3.500,6.300 H6.300 V2.500 Q6.300,1.200 7.600,1.200 H14.100 Q15.400,1.200 15.400,2.500 V6.300 H20.100 V2.500 Q20.100,1.200 21.400,1.200 H27.700 Q29,1.200 29,2.500 V6.300 H32.200 Q33.700,6.300 33.700,7.800 V25.500 Q33.700,26.300 32.900,26.300 H2.800 Q2,26.300 2,25.500Z" fill="#2f4258"/></svg>
<!-- add user -->
<svg class="abs" style="left:1810px;top:11px" width="46" height="46" viewBox="0 0 46 46"><circle cx="18" cy="10.5" r="7.5" fill="none" stroke="#2f4258" stroke-width="2"/><path d="M4,39 V33 Q4,24 13,22 H23 Q29,23 31,28" fill="none" stroke="#2f4258" stroke-width="2"/><path d="M4,39 H26" stroke="#2f4258" stroke-width="2"/><circle cx="34" cy="36" r="8" fill="#2f4258"/><path d="M34,31 V41 M29,36 H39" stroke="#fff" stroke-width="1.8"/></svg>
<!-- avatar photo -->
<svg class="abs" style="left:1859px;top:1px" width="60" height="59" viewBox="0 0 60 59"><defs><clipPath id="avc"><ellipse cx="30" cy="29.5" rx="29" ry="28.5"/></clipPath><linearGradient id="avbg" x1="0" y1="0" x2="0" y2="1"><stop offset="0" stop-color="#a9adb3"/><stop offset=".5" stop-color="#c2c5ca"/><stop offset="1" stop-color="#6b6e73"/></linearGradient></defs><g clip-path="url(#avc)"><rect width="60" height="59" fill="url(#avbg)"/><rect x="0" y="6" width="18" height="30" fill="#b9bdc4" opacity=".7"/><rect x="38" y="10" width="22" height="22" fill="#a7abb2" opacity=".6"/><rect x="0" y="36" width="60" height="23" fill="#55585d" opacity=".6"/><path d="M22,20 Q23,14 29,14 Q35,14 36,20 L38,44 L34,46 L34,58 L24,58 L24,46 L20,44Z" fill="#4a4a3a"/><ellipse cx="29" cy="11" rx="3.6" ry="4.6" fill="#8a6a58"/><path d="M25,9 Q29,3 33,9 Q29,7 25,9Z" fill="#2a211d"/><rect x="27" y="16" width="4" height="26" fill="#4a4d45"/><rect x="13" y="38" width="6" height="8" fill="#d9dadc" opacity=".8"/></g></svg>

</div>

<!-- TINKERCAD TOOLBAR -->
<div id="tkt" class="abs">
<!-- copy (disabled) -->
<svg class="abs" style="left:14px;top:13px" width="34" height="34" viewBox="0 0 34 34" fill="#f0f0f4" stroke="#c5d0da" stroke-width="1.4"><rect x="1.5" y="1.5" width="21" height="21"/><rect x="9" y="9.5" width="21" height="21"/></svg>
<!-- paste -->
<svg class="abs" style="left:72px;top:12px" width="34" height="35" viewBox="0 0 34 36" fill="none" stroke="#1f2c33" stroke-width="1.7"><path d="M9,6 H3 V32 H23 V28 M19,6 H23 V12"/><path d="M9,8.5 V5 H11.5 V2.5 H16.5 V5 H19 V8.5Z" fill="#1f2c33"/><rect x="12.7" y="3.4" width="2.6" height="2" fill="#f0f0f4" stroke="none"/><rect x="15.5" y="12.5" width="14" height="15.5" fill="#f0f0f4"/></svg>
<!-- duplicate (disabled) -->
<svg class="abs" style="left:132px;top:11px" width="36" height="36" viewBox="0 0 36 36" fill="#f0f0f4" stroke="#c2cfdb" stroke-width="1.500"><path d="M5,19 L2.500,19.500 L5.500,34.500 L21,31.500 L21,28"/><path d="M9,16 L6.500,16.500 L9,31 L27,29 L27,25"/><rect x="13.500" y="4.500" width="19.500" height="20" stroke-width="3"/></svg>
<!-- trash (disabled) -->
<svg class="abs" style="left:196px;top:10px" width="28" height="38" viewBox="0 0 28 38" fill="none" stroke="#c2cfdb" stroke-width="2.600"><path d="M1,8 H27"/><path d="M9,7 Q9,2.500 14,2.500 Q19,2.500 19,7" stroke-width="2.200"/><path d="M3.800,8.500 V30.500 Q3.800,34.700 8,34.700 H20 Q24.200,34.700 24.200,30.500 V8.500"/><path d="M9.300,13.500 V28.500 M14,13.500 V28.500 M18.700,13.500 V28.500" stroke-width="1.800"/></svg>
<div class="vsep" style="left:240px"></div>
<!-- undo -->
<svg class="abs" style="left:258px;top:19px" width="28" height="22" viewBox="0 0 30 24"><path d="M1,10 L12.5,1.5 V7 Q25,7 29,21 Q22,13 12.5,13.5 V19Z" fill="#222b33"/></svg>
<!-- redo (disabled) -->
<svg class="abs" style="left:317px;top:19px" width="28" height="22" viewBox="0 0 30 24"><path d="M29,10 L17.5,1.5 V7 Q5,7 1,21 Q8,13 17.5,13.5 V19Z" fill="#c5d0da"/></svg>
<div class="vsep" style="left:362px"></div>
<div class="vsep" style="left:1201px"></div>
<!-- view/notes visibility -->
<svg class="abs" style="left:1217px;top:13px" width="32" height="36" viewBox="0 0 32 36"><path d="M6,2 H26 Q30,2 30,6 V22 Q30,26 26,26 H21 L16,33 L11,26 H6 Q2,26 2,22 V6 Q2,2 6,2Z" fill="#f7f7f9" stroke="#16222a" stroke-width="2.2" stroke-linejoin="round"/><path d="M5.200,14.500 Q16,2.500 26.800,14.500 Q16,26.500 5.200,14.500Z" fill="#16222a"/><ellipse cx="16" cy="14.500" rx="5.500" ry="4.700" fill="#f7f7f9"/></svg>
<div class="vsep" style="left:1263px"></div>
<!-- bulb -->
<svg class="abs" style="left:1281px;top:11px" width="26" height="38" viewBox="0 0 26 38" fill="none" stroke="#c2cfdb" stroke-width="2.200"><path d="M8.5,27 V23 Q2,18 2,12 Q2,2 13,2 Q24,2 24,12 Q24,18 17.500,23 V27Z"/><path d="M8,30.500 H18 M9,33.5 H17 M10.500,36.500 H15.500"/></svg>
<div class="vsep" style="left:1324px"></div>
<!-- group -->
<svg class="abs" style="left:1338px;top:14px" width="36" height="34" viewBox="0 0 36 34" fill="none" stroke="#c2cfdb" stroke-width="2.600"><path d="M2,2 H28 V9 Q34,13 33,21 Q31,31 21,31 Q14,31 11,25 H2Z" stroke-linejoin="round"/></svg>
<!-- ungroup -->
<svg class="abs" style="left:1399px;top:14px" width="36" height="34" viewBox="0 0 36 34" fill="none" stroke="#c2cfdb" stroke-width="2.600"><rect x="2" y="2" width="26" height="23"/><circle cx="21" cy="19" r="12" fill="#f0f0f4"/></svg>
<div class="vsep" style="left:1445px"></div>
<!-- align -->
<svg class="abs" style="left:1463px;top:12px" width="30" height="36" viewBox="0 0 30 36" fill="none" stroke="#c2cfdb" stroke-width="2.300"><path d="M2.500,1 V35" stroke-width="2.600"/><rect x="8" y="7" width="19" height="8"/><rect x="8" y="21" width="12" height="8" fill="#dde4ea"/></svg>
<!-- mirror -->
<svg class="abs" style="left:1516px;top:11px" width="40" height="38" viewBox="0 0 40 38" fill="none" stroke="#c2cfdb" stroke-width="2.200"><path d="M20,1 V37" stroke-width="2.600"/><path d="M15,8 V30 H2Z"/><path d="M25,8 V30 H38Z" fill="#dfe5ea"/></svg>
<div class="vsep" style="left:1566px"></div>
<div class="tbtn" style="left:1583px">Import</div>
<div class="tbtn" style="left:1693px">Export</div>
<div class="tbtn" style="left:1803px">Send To</div>

</div>

<!-- CANVAS -->
<div id="canvas" class="abs">
<svg class="abs" style="left:0;top:0" width="1575" height="750" viewBox="0 210 1575 750">
<polygon points="405.0,597.0 1045.5,279.0 1462.0,770.0 816.0,1086.0" fill="#d8eff9"/>
<path d="M408.2,595.4L819.2,1084.4M407.0,599.4L1047.6,281.4M411.4,593.8L822.4,1082.9M409.1,601.9L1049.6,283.9M414.5,592.3L825.6,1081.3M411.1,604.3L1051.7,286.3M417.7,590.7L828.8,1079.7M413.2,606.7L1053.8,288.8M420.9,589.1L832.0,1078.2M415.2,609.2L1055.9,291.2M424.1,587.5L835.3,1076.6M417.3,611.6L1057.9,293.7M427.3,585.9L838.5,1075.0M419.3,614.0L1060.0,296.1M430.5,584.4L841.7,1073.4M421.4,616.5L1062.1,298.6M433.6,582.8L844.9,1071.9M423.4,618.9L1064.2,301.0M440.0,579.6L851.3,1068.7M427.5,623.8L1068.3,305.9M443.2,578.0L854.5,1067.2M429.6,626.2L1070.4,308.3M446.4,576.5L857.7,1065.6M431.6,628.7L1072.5,310.8M449.6,574.9L860.9,1064.0M433.7,631.1L1074.5,313.2M452.7,573.3L864.1,1062.4M435.7,633.5L1076.6,315.7M455.9,571.7L867.4,1060.9M437.8,636.0L1078.7,318.1M459.1,570.1L870.6,1059.3M439.8,638.4L1080.8,320.6M462.3,568.6L873.8,1057.7M441.8,640.8L1082.8,323.0M465.5,567.0L877.0,1056.2M443.9,643.3L1084.9,325.5M471.8,563.8L883.4,1053.0M448.0,648.2L1089.1,330.4M475.0,562.2L886.6,1051.4M450.0,650.6L1091.1,332.8M478.2,560.6L889.8,1049.9M452.1,653.0L1093.2,335.3M481.4,559.1L893.1,1048.3M454.1,655.5L1095.3,337.7M484.6,557.5L896.3,1046.7M456.2,657.9L1097.4,340.1M487.8,555.9L899.5,1045.2M458.2,660.3L1099.4,342.6M491.0,554.3L902.7,1043.6M460.3,662.8L1101.5,345.0M494.1,552.7L905.9,1042.0M462.3,665.2L1103.6,347.5M497.3,551.2L909.1,1040.4M464.4,667.7L1105.7,349.9M503.7,548.0L915.6,1037.3M468.5,672.5L1109.8,354.8M506.9,546.4L918.8,1035.7M470.5,675.0L1111.9,357.3M510.1,544.8L922.0,1034.2M472.6,677.4L1114.0,359.7M513.3,543.2L925.2,1032.6M474.6,679.8L1116.1,362.2M516.5,541.7L928.4,1031.0M476.7,682.3L1118.1,364.6M519.7,540.1L931.6,1029.4M478.7,684.7L1120.2,367.1M522.8,538.5L934.8,1027.9M480.8,687.2L1122.3,369.5M526.0,536.9L938.1,1026.3M482.8,689.6L1124.4,372.0M529.2,535.3L941.3,1024.7M484.9,692.0L1126.4,374.4M535.6,532.2L947.7,1021.6M489.0,696.9L1130.6,379.3M538.8,530.6L950.9,1020.0M491.0,699.4L1132.7,381.8M542.0,529.0L954.1,1018.4M493.1,701.8L1134.8,384.2M545.2,527.4L957.4,1016.8M495.1,704.2L1136.8,386.7M548.4,525.8L960.6,1015.3M497.2,706.7L1138.9,389.1M551.5,524.2L963.8,1013.7M499.2,709.1L1141.0,391.6M554.7,522.7L967.0,1012.1M501.3,711.5L1143.1,394.0M557.9,521.1L970.2,1010.6M503.3,714.0L1145.1,396.5M561.1,519.5L973.5,1009.0M505.4,716.4L1147.2,398.9M567.5,516.3L979.9,1005.8M509.5,721.3L1151.4,403.8M570.7,514.7L983.1,1004.3M511.5,723.7L1153.5,406.3M573.9,513.1L986.3,1002.7M513.6,726.2L1155.5,408.7M577.1,511.6L989.6,1001.1M515.6,728.6L1157.6,411.2M580.3,510.0L992.8,999.5M517.7,731.1L1159.7,413.6M583.5,508.4L996.0,998.0M519.7,733.5L1161.8,416.1M586.7,506.8L999.2,996.4M521.8,735.9L1163.8,418.5M589.9,505.2L1002.4,994.8M523.8,738.4L1165.9,421.0M593.0,503.6L1005.7,993.2M525.9,740.8L1168.0,423.4M599.4,500.5L1012.1,990.1M530.0,745.7L1172.2,428.3M602.6,498.9L1015.3,988.5M532.0,748.2L1174.2,430.8M605.8,497.3L1018.5,986.9M534.1,750.6L1176.3,433.2M609.0,495.7L1021.8,985.3M536.1,753.0L1178.4,435.7M612.2,494.1L1025.0,983.8M538.2,755.5L1180.5,438.1M615.4,492.5L1028.2,982.2M540.3,757.9L1182.6,440.6M618.6,490.9L1031.4,980.6M542.3,760.4L1184.6,443.0M621.8,489.4L1034.7,979.0M544.4,762.8L1186.7,445.5M625.0,487.8L1037.9,977.5M546.4,765.2L1188.8,447.9M631.4,484.6L1044.3,974.3M550.5,770.1L1193.0,452.8M634.6,483.0L1047.5,972.7M552.6,772.6L1195.0,455.3M637.8,481.4L1050.8,971.2M554.6,775.0L1197.1,457.7M641.0,479.8L1054.0,969.6M556.7,777.5L1199.2,460.2M644.2,478.3L1057.2,968.0M558.7,779.9L1201.3,462.6M647.4,476.7L1060.4,966.4M560.8,782.3L1203.4,465.1M650.6,475.1L1063.7,964.8M562.8,784.8L1205.4,467.5M653.8,473.5L1066.9,963.3M564.9,787.2L1207.5,470.0M657.0,471.9L1070.1,961.7M566.9,789.7L1209.6,472.5M663.4,468.7L1076.6,958.5M571.0,794.6L1213.8,477.4M666.6,467.1L1079.8,957.0M573.1,797.0L1215.8,479.8M669.8,465.6L1083.0,955.4M575.1,799.4L1217.9,482.3M673.0,464.0L1086.3,953.8M577.2,801.9L1220.0,484.7M676.2,462.4L1089.5,952.2M579.3,804.3L1222.1,487.2M679.4,460.8L1092.7,950.6M581.3,806.8L1224.2,489.6M682.6,459.2L1095.9,949.1M583.4,809.2L1226.2,492.1M685.8,457.6L1099.2,947.5M585.4,811.7L1228.3,494.5M689.0,456.0L1102.4,945.9M587.5,814.1L1230.4,497.0M695.4,452.8L1108.8,942.8M591.6,819.0L1234.6,501.9M698.6,451.3L1112.1,941.2M593.6,821.4L1236.7,504.3M701.8,449.7L1115.3,939.6M595.7,823.9L1238.7,506.8M705.0,448.1L1118.5,938.0M597.7,826.3L1240.8,509.3M708.2,446.5L1121.8,936.4M599.8,828.8L1242.9,511.7M711.4,444.9L1125.0,934.9M601.9,831.2L1245.0,514.2M714.6,443.3L1128.2,933.3M603.9,833.7L1247.1,516.6M717.8,441.7L1131.4,931.7M606.0,836.1L1249.1,519.1M721.0,440.1L1134.7,930.1M608.0,838.5L1251.2,521.5M727.4,436.9L1141.1,927.0M612.1,843.4L1255.4,526.4M730.6,435.4L1144.4,925.4M614.2,845.9L1257.5,528.9M733.8,433.8L1147.6,923.8M616.2,848.3L1259.6,531.4M737.0,432.2L1150.8,922.2M618.3,850.8L1261.6,533.8M740.2,430.6L1154.1,920.6M620.3,853.2L1263.7,536.3M743.4,429.0L1157.3,919.1M622.4,855.7L1265.8,538.7M746.6,427.4L1160.5,917.5M624.5,858.1L1267.9,541.2M749.8,425.8L1163.7,915.9M626.5,860.6L1270.0,543.6M753.0,424.2L1167.0,914.3M628.6,863.0L1272.1,546.1M759.4,421.0L1173.4,911.2M632.7,867.9L1276.2,551.0M762.6,419.5L1176.7,909.6M634.7,870.3L1278.3,553.5M765.8,417.9L1179.9,908.0M636.8,872.8L1280.4,555.9M769.0,416.3L1183.1,906.4M638.8,875.2L1282.5,558.4M772.2,414.7L1186.4,904.8M640.9,877.7L1284.6,560.8M775.4,413.1L1189.6,903.2M643.0,880.1L1286.6,563.3M778.6,411.5L1192.8,901.7M645.0,882.6L1288.7,565.7M781.8,409.9L1196.1,900.1M647.1,885.0L1290.8,568.2M785.1,408.3L1199.3,898.5M649.1,887.5L1292.9,570.6M791.5,405.1L1205.8,895.3M653.2,892.4L1297.1,575.6M794.7,403.5L1209.0,893.8M655.3,894.8L1299.1,578.0M797.9,401.9L1212.2,892.2M657.4,897.3L1301.2,580.5M801.1,400.3L1215.5,890.6M659.4,899.7L1303.3,582.9M804.3,398.8L1218.7,889.0M661.5,902.1L1305.4,585.4M807.5,397.2L1222.0,887.4M663.5,904.6L1307.5,587.8M810.7,395.6L1225.2,885.8M665.6,907.0L1309.6,590.3M813.9,394.0L1228.4,884.3M667.6,909.5L1311.7,592.8M817.1,392.4L1231.7,882.7M669.7,911.9L1313.7,595.2M823.5,389.2L1238.1,879.5M673.8,916.8L1317.9,600.1M826.8,387.6L1241.4,877.9M675.9,919.3L1320.0,602.6M830.0,386.0L1244.6,876.3M677.9,921.7L1322.1,605.1M833.2,384.4L1247.8,874.8M680.0,924.2L1324.2,607.5M836.4,382.8L1251.1,873.2M682.0,926.6L1326.3,610.0M839.6,381.2L1254.3,871.6M684.1,929.1L1328.3,612.4M842.8,379.6L1257.6,870.0M686.2,931.5L1330.4,614.9M846.0,378.0L1260.8,868.4M688.2,934.0L1332.5,617.3M849.2,376.4L1264.0,866.8M690.3,936.4L1334.6,619.8M855.6,373.3L1270.5,863.7M694.4,941.3L1338.8,624.7M858.9,371.7L1273.8,862.1M696.5,943.8L1340.9,627.2M862.1,370.1L1277.0,860.5M698.5,946.2L1342.9,629.6M865.3,368.5L1280.2,858.9M700.6,948.7L1345.0,632.1M868.5,366.9L1283.5,857.3M702.6,951.1L1347.1,634.6M871.7,365.3L1286.7,855.7M704.7,953.6L1349.2,637.0M874.9,363.7L1290.0,854.2M706.8,956.0L1351.3,639.5M878.1,362.1L1293.2,852.6M708.8,958.5L1353.4,641.9M881.3,360.5L1296.4,851.0M710.9,960.9L1355.5,644.4M887.8,357.3L1302.9,847.8M715.0,965.8L1359.6,649.3M891.0,355.7L1306.2,846.2M717.0,968.3L1361.7,651.8M894.2,354.1L1309.4,844.6M719.1,970.7L1363.8,654.2M897.4,352.5L1312.6,843.1M721.2,973.2L1365.9,656.7M900.6,350.9L1315.9,841.5M723.2,975.6L1368.0,659.2M903.8,349.3L1319.1,839.9M725.3,978.1L1370.1,661.6M907.1,347.7L1322.4,838.3M727.3,980.5L1372.2,664.1M910.3,346.1L1325.6,836.7M729.4,983.0L1374.2,666.5M913.5,344.5L1328.9,835.1M731.5,985.4L1376.3,669.0M919.9,341.3L1335.3,832.0M735.6,990.3L1380.5,673.9M923.1,339.8L1338.6,830.4M737.6,992.8L1382.6,676.4M926.4,338.2L1341.8,828.8M739.7,995.2L1384.7,678.9M929.6,336.6L1345.1,827.2M741.8,997.7L1386.8,681.3M932.8,335.0L1348.3,825.6M743.8,1000.1L1388.9,683.8M936.0,333.4L1351.6,824.0M745.9,1002.6L1390.9,686.2M939.2,331.8L1354.8,822.4M747.9,1005.0L1393.0,688.7M942.4,330.2L1358.0,820.8M750.0,1007.5L1395.1,691.2M945.7,328.6L1361.3,819.3M752.1,1009.9L1397.2,693.6M952.1,325.4L1367.8,816.1M756.2,1014.8L1401.4,698.5M955.3,323.8L1371.0,814.5M758.3,1017.3L1403.5,701.0M958.5,322.2L1374.3,812.9M760.3,1019.7L1405.6,703.5M961.7,320.6L1377.5,811.3M762.4,1022.2L1407.7,705.9M965.0,319.0L1380.8,809.7M764.4,1024.7L1409.7,708.4M968.2,317.4L1384.0,808.1M766.5,1027.1L1411.8,710.9M971.4,315.8L1387.3,806.6M768.6,1029.6L1413.9,713.3M974.6,314.2L1390.5,805.0M770.6,1032.0L1416.0,715.8M977.8,312.6L1393.8,803.4M772.7,1034.5L1418.1,718.3M984.3,309.4L1400.3,800.2M776.8,1039.4L1422.3,723.2M987.5,307.8L1403.5,798.6M778.9,1041.8L1424.4,725.6M990.7,306.2L1406.7,797.0M780.9,1044.3L1426.5,728.1M993.9,304.6L1410.0,795.4M783.0,1046.7L1428.6,730.6M997.2,303.0L1413.2,793.8M785.1,1049.2L1430.6,733.0M1000.4,301.4L1416.5,792.3M787.1,1051.6L1432.7,735.5M1003.6,299.8L1419.7,790.7M789.2,1054.1L1434.8,738.0M1006.8,298.2L1423.0,789.1M791.2,1056.5L1436.9,740.4M1010.0,296.6L1426.2,787.5M793.3,1059.0L1439.0,742.9M1016.5,293.4L1432.7,784.3M797.4,1063.9L1443.2,747.8M1019.7,291.8L1436.0,782.7M799.5,1066.4L1445.3,750.3M1022.9,290.2L1439.2,781.1M801.6,1068.8L1447.4,752.7M1026.2,288.6L1442.5,779.5M803.6,1071.3L1449.5,755.2M1029.4,287.0L1445.7,778.0M805.7,1073.7L1451.5,757.7M1032.6,285.4L1449.0,776.4M807.7,1076.2L1453.6,760.1M1035.8,283.8L1452.2,774.8M809.8,1078.6L1455.7,762.6M1039.1,282.2L1455.5,773.2M811.9,1081.1L1457.8,765.1M1042.3,280.6L1458.7,771.6M813.9,1083.5L1459.9,767.5" stroke="#45abd9" stroke-width=".75" opacity=".6" fill="none"/>
<path d="M436.8,581.2L848.1,1070.3M425.5,621.4L1066.2,303.5M468.7,565.4L880.2,1054.6M445.9,645.7L1087.0,327.9M500.5,549.6L912.3,1038.9M466.4,670.1L1107.8,352.4M532.4,533.7L944.5,1023.1M486.9,694.5L1128.5,376.9M564.3,517.9L976.7,1007.4M507.4,718.9L1149.3,401.4M596.2,502.1L1008.9,991.7M527.9,743.3L1170.1,425.9M628.2,486.2L1041.1,975.9M548.5,767.7L1190.9,450.4M660.2,470.3L1073.3,960.1M569.0,792.1L1211.7,474.9M692.2,454.4L1105.6,944.3M589.5,816.5L1232.5,499.4M724.2,438.5L1137.9,928.5M610.1,841.0L1253.3,524.0M756.2,422.6L1170.2,912.7M630.6,865.4L1274.1,548.5M788.3,406.7L1202.5,896.9M651.2,889.9L1295.0,573.1M820.3,390.8L1234.9,881.1M671.8,914.4L1315.8,597.7M852.4,374.9L1267.3,865.3M692.3,938.9L1336.7,622.3M884.6,358.9L1299.7,849.4M712.9,963.4L1357.5,646.9M916.7,342.9L1332.1,833.5M733.5,987.9L1378.4,671.5M948.9,327.0L1364.5,817.7M754.1,1012.4L1399.3,696.1M981.1,311.0L1397.0,801.8M774.7,1036.9L1420.2,720.7M1013.3,295.0L1429.5,785.9M795.4,1061.5L1441.1,745.4" stroke="#3f93bd" stroke-width="1" opacity=".85" fill="none"/>
<path d="M405.0,597.0L1045.5,279.0L1462.0,770.0L816.0,1086.0ZM417.5,599.1L818.7,1076.3L1449.2,767.9L1042.7,288.7Z" fill="#8ccbe8" opacity=".4" fill-rule="evenodd"/>
<text transform="matrix(.656 .765 -.861 .507 437.5 600.5)" font-family="Liberation Sans, sans-serif" font-weight="700" font-size="40" fill="#5fa3c6" opacity=".36">Workplane</text>

<defs>
<filter id="blur4" x="-50%" y="-50%" width="200%" height="200%"><feGaussianBlur stdDeviation="4"/></filter>
<filter id="blur2" x="-50%" y="-50%" width="200%" height="200%"><feGaussianBlur stdDeviation="2.2"/></filter>
<linearGradient id="rollg" gradientUnits="userSpaceOnUse" x1="700" y1="290" x2="810" y2="510"><stop offset="0" stop-color="#d61d2b"/><stop offset=".35" stop-color="#e5202f"/><stop offset="1" stop-color="#c01a28"/></linearGradient>
<linearGradient id="rodg" gradientUnits="userSpaceOnUse" x1="270" y1="600" x2="320" y2="710"><stop offset="0" stop-color="#d81d2c"/><stop offset=".4" stop-color="#e82131"/><stop offset="1" stop-color="#c41b29"/></linearGradient>
<linearGradient id="rodg2" gradientUnits="userSpaceOnUse" x1="1290" y1="105" x2="1340" y2="210"><stop offset="0" stop-color="#d81d2c"/><stop offset=".4" stop-color="#e82131"/><stop offset="1" stop-color="#c41b29"/></linearGradient>
<linearGradient id="tubeg" gradientUnits="userSpaceOnUse" x1="207" y1="0" x2="400" y2="0"><stop offset="0" stop-color="#c96b1b"/><stop offset=".5" stop-color="#cf701c"/><stop offset="1" stop-color="#d8761d"/></linearGradient>
<linearGradient id="capg" gradientUnits="userSpaceOnUse" x1="475" y1="0" x2="600" y2="0"><stop offset="0" stop-color="#0b84b5"/><stop offset=".6" stop-color="#0c90c5"/><stop offset="1" stop-color="#0a7fae"/></linearGradient>
<radialGradient id="sphg" cx=".42" cy=".38" r=".62"><stop offset="0" stop-color="#0fa2da"/><stop offset=".6" stop-color="#0d97cd"/><stop offset="1" stop-color="#0b83b4"/></radialGradient>
<linearGradient id="greeng" gradientUnits="userSpaceOnUse" x1="0" y1="-8" x2="0" y2="8"><stop offset="0" stop-color="#4ab851"/><stop offset=".6" stop-color="#41ab48"/><stop offset="1" stop-color="#389a3f"/></linearGradient>
<radialGradient id="flg" gradientUnits="userSpaceOnUse" cx="650" cy="400" r="520"><stop offset="0" stop-color="#f08623"/><stop offset=".6" stop-color="#e98021"/><stop offset="1" stop-color="#d9761e"/></radialGradient>
<radialGradient id="flg2" gradientUnits="userSpaceOnUse" cx="820" cy="540" r="360"><stop offset="0" stop-color="#f08623"/><stop offset=".7" stop-color="#e67e20"/><stop offset="1" stop-color="#d4731d"/></radialGradient>
</defs>

<!-- shadows on workplane -->
<g filter="url(#blur4)" opacity=".55">
<ellipse cx="864" cy="496" rx="17" ry="6" transform="rotate(-22 864 496)" fill="#5c6f86"/>
<ellipse cx="540" cy="577" rx="8" ry="13" fill="#2f6a98" opacity=".9"/>
<ellipse cx="1008" cy="646" rx="22" ry="9" transform="rotate(35 1008 646)" fill="#7aa6c0"/>
<polygon points="625,590 640,583 700,640 690,650" fill="#7aa6c0"/>
</g>

<!-- ===== ORANGE PIECE (Z4: origin 520,320 scale 1/3.375) ===== -->
<g transform="translate(520,320) scale(.296296)" stroke="#3b6488" stroke-width="4.4" stroke-linejoin="round">
<!-- plate -->
<polygon points="95,150 133,190 127,950 90,905" fill="#c4681a"/>
<polygon points="133,190 352,82 352,845 133,955" fill="#cb6d1c"/>
<polygon points="95,150 315,40 352,82 133,190" fill="#ee8322"/>
<!-- strips left of tube -->
<polygon points="133,470 185,530 185,1020 127,950" fill="#c86a1b"/>
<polygon points="185,530 211,500 211,1000 185,1020" fill="#cf701c"/>
<!-- tube body -->
<path d="M211,400 L378,400 L378,895 L372,905 C330,895 250,900 218,965 L211,1000Z" fill="url(#tubeg)"/>
<path d="M378,400 L401,433 L401,890 L378,900Z" fill="#cd6f1c"/>
</g>
<!-- lug (Z8: origin 520,480 scale 1/13.5) -->
<g transform="translate(520,480) scale(.074074)" stroke="#3b6488" stroke-width="18" stroke-linejoin="round">
<polygon points="150,292 352,188 352,440 250,335" fill="#ee8322"/>
<ellipse cx="290" cy="532" rx="272" ry="112" transform="rotate(60 290 532)" fill="#c96b1a"/>
<ellipse cx="290" cy="524" rx="128" ry="52" transform="rotate(62 290 524)" fill="#ee8322"/>
</g>
<!-- flange (Z6: origin 530,380 scale 1/10.286) -->
<g transform="translate(530,380) scale(.09722)" stroke="#3b6488" stroke-width="13" stroke-linejoin="round">
<path d="M380,900 C400,850 420,790 450,720 C560,480 760,330 960,280 C1040,260 1130,280 1190,350 C1230,420 1235,500 1200,590 C1180,640 1150,690 1125,715 L1060,770 L1060,640 C1090,590 1110,530 1095,470 C1075,400 1000,380 930,395 C800,420 640,540 560,700 C530,760 515,820 510,870 L540,910 L540,1040 L455,1000 C410,960 395,930 380,900Z" fill="#cb6d1c"/>
<path d="M360,900 C300,800 290,700 310,620 C340,480 450,300 620,210 C760,140 900,140 1000,190 C1090,230 1160,290 1190,350 C1130,280 1040,260 960,280 C760,330 560,480 450,720 C420,790 400,850 380,900 Z" fill="url(#flg)"/>
<path d="M510,870 C515,820 530,760 560,700 C640,540 800,420 930,395 C1000,380 1075,400 1095,470 C1110,530 1090,590 1060,640 C1000,625 900,625 800,640 C680,660 580,740 520,850Z" fill="url(#flg2)"/>
<path d="M360,900 L455,1000 M300,470 L330,540 L300,560" fill="none" stroke-width="10"/>
</g>
<!-- ===== RED TOWER (Z1: origin 640,270 scale 1/6) ===== -->
<g transform="translate(640,270) scale(.1666667)" stroke="#44597b" stroke-width="8.6" stroke-linejoin="round">
<!-- tower top rim -->
<polygon points="100,475 840,105 1000,230 1000,700 415,690" fill="#e01e2d"/>
<!-- inner back wall face -->
<polygon points="175,480 845,155 845,260 330,600" fill="#c01a28"/>
<polygon points="845,155 880,160 960,215 845,260" fill="#d01c2a"/>
<!-- left face + front face of tower (down to platform) -->
<polygon points="100,475 415,690 415,1660 320,1705 100,1445" fill="#b61a26"/>
<polygon points="415,690 1150,500 1150,1520 680,1745 550,1600 415,1660" fill="#b61a26"/>
<polygon points="1150,600 1160,590 1160,1290 1150,1300" fill="#b61a26"/>
<!-- thin rod right -->
<path d="M1190,160 L1390,50 C1420,40 1450,80 1448,130 C1447,145 1444,155 1440,160 L1245,268Z" fill="url(#rodg2)"/>
<!-- roller -->
<path d="M380,475 L1110,100 C1150,90 1215,150 1240,250 C1250,290 1248,310 1240,320 L480,710 C420,720 340,560 380,475Z" fill="url(#rollg)"/>
<ellipse cx="422" cy="596" rx="52" ry="128" transform="rotate(-25 422 596)" fill="#c51b29"/>
<!-- thin rod left -->
<path d="M150,672 L395,535 C430,540 455,600 450,655 L190,775Z" fill="url(#rodg)"/>
<path d="M395,535 C430,540 455,600 450,655" fill="none"/>
<ellipse cx="168" cy="722" rx="28" ry="54" transform="rotate(-22 168 722)" fill="#cf1c2a"/>
</g>
<!-- tower front details + block (Z1) -->
<g transform="translate(640,270) scale(.1666667)" stroke="#44597b" stroke-width="8.6" stroke-linejoin="round" fill="none">
<!-- slots on tower front -->
<path d="M550,680 L550,830 L600,885 L600,660" fill="#c51b29"/>
<path d="M550,830 L550,1170"/>
<path d="M640,730 L680,770 L680,1040 L640,1010Z" fill="#c51b29"/>
<path d="M680,660 L680,770 M735,720 L735,1080"/>
<path d="M1060,880 L1060,1020 M1090,870 L1090,1000"/>
<!-- block -->
<path d="M600,420 L930,800 L930,950 L680,660 L640,640 C620,610 625,560 600,520Z" fill="#b61a26"/>
<polygon points="930,800 1395,575 1395,720 930,950" fill="#be1a28"/>
<polygon points="600,420 1070,190 1395,575 930,800" fill="#e01e2d"/>
<ellipse cx="985" cy="482" rx="66" ry="50" fill="#c01a28"/>
<path d="M930,510 C950,470 1010,460 1045,490 C1030,520 960,540 930,510Z" fill="#e5202f" stroke-width="4"/>
<ellipse cx="1160" cy="762" rx="62" ry="38" transform="rotate(-28 1160 762)" fill="#e01e2d"/>
</g>

<!-- tower lower (Z2: origin 640,400 scale 1/6) -->
<g transform="translate(640,400) scale(.1666667)" stroke="#44597b" stroke-width="8.6" stroke-linejoin="round" fill="none">
<!-- protruding front part -->
<polygon points="550,390 680,500 680,965 550,820" fill="#b61a26"/>
<polygon points="680,500 1150,300 1150,740 680,965" fill="#bd1a28"/>
<path d="M550,40 L600,100 L600,0 M550,0 L550,270 L600,325 L600,385 L550,390 L600,440 L600,370"/>
<path d="M650,0 L650,250 L680,290 L720,270 L720,0 M680,290 L680,440 M720,270 L720,420"/>
<polygon points="650,250 690,240 720,270 680,290" fill="#e01e2d"/>
<polygon points="660,450 705,430 720,470 735,500 690,495 670,480" fill="#e01e2d"/>
<path d="M720,470 L1080,320 M735,500 L790,440 M1060,110 L1060,230 M1090,100 L1090,215"/>
<polygon points="1060,235 1130,215 1145,265 1085,285" fill="#e01e2d"/>
<polygon points="940,355 1060,305 1085,330 1010,365" fill="#e01e2d"/>
<path d="M1060,285 L1085,330 L1085,285"/>
<!-- curved rest -->
<path d="M760,495 L1005,365 L1020,380 L1020,520 L990,545 C900,545 810,590 770,655 L760,640Z" fill="#c51b29"/>
<path d="M770,655 C820,600 900,560 990,545 M795,765 C840,720 900,690 975,675 M800,805 C850,800 960,750 975,710 C900,715 830,760 800,805Z"/>
<path d="M830,785 C860,770 920,745 940,730 C900,735 850,760 830,785Z" fill="#e01e2d" stroke-width="3"/>
</g>

<!-- ===== BLUE CAPSULE + SPHERE (Z5: origin 840,470 scale 1/5.4) ===== -->
<g transform="translate(840,470) scale(.185185)" stroke="#3b6488" stroke-width="7.5" stroke-linejoin="round">
<polygon points="280,250 475,465 475,700 280,470" fill="#0b7dac"/>
<path d="M475,465 C540,455 600,400 600,310 L600,590 C600,630 570,665 530,670 L475,700Z" fill="url(#capg)"/>
<path d="M280,250 C285,175 350,130 420,135 C520,140 600,220 600,310 C600,400 530,460 475,465Z" fill="#0e9bd2"/>
<path d="M385,215 L425,205 L440,215 L470,265 C460,290 420,300 395,285Z" fill="#0c8cc0" stroke-width="5"/>
<path d="M395,285 L385,215 M440,215 L450,275" fill="none" stroke-width="4"/>
<circle cx="825" cy="832" r="158" fill="url(#sphg)"/>
</g>
<!-- ===== RED PLATFORM (real coords) ===== -->
<g stroke="#44597b" stroke-width="1.5" stroke-linejoin="round">
<polygon points="630,586.7 693.3,554.2 709.2,546.7 731.7,536.7 753.3,560.8 831.7,523.3 833.3,485 1018.4,701.7 995.1,700.2 855.6,769.4 798.2,786.7" fill="#e01e2d"/>
</g>
<!-- ===== FRONT BLOCKS (Z3: origin 780,560 scale 1/3.175) ===== -->
<g transform="translate(780,560) scale(.31496)" stroke="#44597b" stroke-width="4.7" stroke-linejoin="round">
<!-- right ramp -->
<polygon points="632,325 757,450 888,607 683,712 683,445 632,395" fill="#e01e2d" stroke="none"/>
<polygon points="757,450 855,440 990,597 888,607" fill="#d61d2b" stroke="none"/>
<path d="M632,325 L757,450 L855,440 L990,597 L888,607 L683,712" fill="none"/>
<polygon points="888,607 990,597 888,690" fill="#c51b29"/>
<!-- block 2 -->
<polygon points="395,140 527,298 525,440 395,495" fill="#b61a26"/>
<polygon points="527,298 632,252 632,395 525,440" fill="#be1a28"/>
<polygon points="395,140 497,92 632,252 527,298" fill="#e01e2d"/>
<ellipse cx="460" cy="353" rx="14" ry="31" transform="rotate(-24 460 353)" fill="#e01e2d"/>
<!-- wall -->
<polygon points="190,610 297,555 395,495 525,440 632,395 683,445 240,665" fill="#e01e2d"/>
<polygon points="240,665 683,445 683,712 888,607 888,690 240,1010" fill="#bd1a28"/>
<path d="M683,445 L683,712" fill="none"/>
<!-- block 1 -->
<polygon points="-476,85 57,720 57,312 190,468 190,610 240,665 240,1010 57,803 -476,165" fill="#b61a26"/>
<polygon points="190,468 297,420 297,555 190,610" fill="#be1a28"/>
<polygon points="57,312 162,258 297,420 190,468" fill="#e01e2d"/>
<ellipse cx="123" cy="521" rx="15" ry="33" transform="rotate(-24 123 521)" fill="#e01e2d"/>
<!-- wedge -->
<polygon points="135,1020 238,930 240,1010" fill="#cc1c2a"/>
<polygon points="5,862 103,775 238,930 135,1020" fill="#e01e2d"/>
</g>
<!-- ===== GREEN ROD ===== -->
<g transform="translate(614.3,623.6) rotate(50.1)" stroke="#37655c" stroke-width="1.4">
<path d="M0,-8.3 L152,-8.3 C158,-8.3 162,-4 162,0.5 C162,5 158,8.3 152,8.3 L0,8.3 C-7,8.3 -10,4 -10,0 C-10,-4 -7,-8.3 0,-8.3Z" fill="url(#greeng)"/>
<ellipse cx="154" cy="0.3" rx="6" ry="7.6" fill="#3da044"/>
</g>

</svg>
<!-- view cube + nav (canvas-relative: y-210) -->
<svg class="abs" style="left:0;top:0" width="200" height="440" viewBox="0 210 200 440">
<defs><linearGradient id="vcr" x1="0" y1="0" x2="1" y2="1"><stop offset="0" stop-color="#fdfdfd"/><stop offset="1" stop-color="#e4e4e6"/></linearGradient><linearGradient id="vcf" x1="1" y1="0" x2="0" y2="1"><stop offset="0" stop-color="#f6f6f7"/><stop offset="1" stop-color="#e9e9eb"/></linearGradient></defs>
<g stroke="#b9babd" stroke-width="1" stroke-linejoin="round">
<polygon points="29,259 88,234 131,272 67,305" fill="#fdfdfd"/>
<polygon points="67,305 131,272 118,320 70,346" fill="url(#vcr)"/>
<polygon points="29,259 67,305 70,346 40,305" fill="url(#vcf)"/>
</g>
<text transform="matrix(.518 .497 -.9 .43 64.1 260)" font-family="Liberation Sans,sans-serif" font-size="15.800" fill="#a2a6ae" stroke="#a2a6ae" stroke-width=".3" letter-spacing=".8">TOP</text>
<text transform="matrix(.86 -.46 -.2 1 79.500 327)" font-family="Liberation Sans,sans-serif" font-size="12.600" fill="#a9adb6" stroke="#a9adb6" stroke-width=".35" letter-spacing=".7">RIGHT</text>
<text transform="matrix(.6 .92 -.12 .9 38.500 292.500)" font-family="Liberation Sans,sans-serif" font-size="10.500" fill="#b9bcc3" letter-spacing=".2">FRONT</text>
<g fill="#fafafa" stroke="#a5a5a8" stroke-width="1"><circle cx="44" cy="391" r="20.500"/><circle cx="44" cy="444" r="20.500"/><circle cx="44" cy="496.500" r="20.500"/><circle cx="44" cy="549" r="20.500"/><circle cx="44" cy="601.500" r="20.500"/></g>
<g fill="none" stroke="#a9a9ac" stroke-width="1.3">
<path d="M35,391.500 L44,382.500 L53,391.500 M37.500,390 V400 H42 V394 H46 V400 H50.500 V390"/>
<path d="M36,440 V435.500 H40.500 M47.500,435.500 H52 V440 M52,448 V452.500 H47.500 M40.500,452.500 H36 V448"/>
<path d="M36,496.500 H52 M44,488.500 V504.500" stroke-width="1.8"/>
<path d="M35.500,549 H52.500" stroke-width="1.8"/>
<path d="M33,609.500 H55 M37.500,608.500 V597 L40,594.500 H49.500 V597 H51 V608.500 M37.500,597 H49.500 M40.500,597 V608"/>
</g>
</svg>
<!-- Edit grid / snap grid -->
<div class="abs" style="left:1450px;top:669px;width:113px;height:27px;border:1px solid #e0e1e6;border-radius:3px;background:#fafafa;color:#7d8696;font-size:15px;line-height:25px;text-align:center;letter-spacing:.4px">Edit Grid</div>
<div class="abs" style="left:1380px;top:713px;width:86px;text-align:right;color:#3a4a62;font-size:15px;line-height:20px;letter-spacing:.4px">Snap Grid</div>
<div class="abs" style="left:1473px;top:710px;width:90px;height:27px;border:1px solid #dcdde3;border-radius:3px;background:#fff;color:#7d8696;font-size:15px;line-height:25px;padding-left:10px;letter-spacing:.3px">1.0 mm<svg class="abs" style="left:65px;top:8px" width="10" height="8" viewBox="0 0 10 8"><path d="M1,6 L5,1.500 L9,6Z" fill="#333"/></svg></div>

</div>

<!-- SIDE PANEL -->
<div id="side" class="abs">
<!-- coords relative to side panel: x-1575, y-210 -->
<svg class="abs" style="left:0;top:0" width="345" height="750" viewBox="1575 210 345 750">
<defs>
<pattern id="stripe" width="15" height="15" patternUnits="userSpaceOnUse" patternTransform="rotate(-45)"><rect width="15" height="15" fill="#b4b9c4"/><rect width="7" height="15" fill="#d0d4dd"/></pattern>
<pattern id="stripe2" width="15" height="15" patternUnits="userSpaceOnUse" patternTransform="rotate(-45)"><rect width="15" height="15" fill="#9a9fab"/><rect width="7" height="15" fill="#b9bdc8"/></pattern>
<pattern id="stripe3" width="15" height="15" patternUnits="userSpaceOnUse" patternTransform="rotate(-45)"><rect width="15" height="15" fill="#a6abb7"/><rect width="7" height="15" fill="#c5c9d3"/></pattern>
<linearGradient id="cylh" x1="0" x2="1" y1="0" y2="0"><stop offset="0" stop-color="#000" stop-opacity=".2"/><stop offset=".3" stop-color="#000" stop-opacity=".08"/><stop offset=".75" stop-color="#fff" stop-opacity=".25"/><stop offset="1" stop-color="#fff" stop-opacity=".05"/></linearGradient>
<linearGradient id="cylo" x1="0" x2="1" y1="0" y2="0"><stop offset="0" stop-color="#8f4d14"/><stop offset=".22" stop-color="#b5611a"/><stop offset=".72" stop-color="#e07a1e"/><stop offset="1" stop-color="#d8741c"/></linearGradient>
<radialGradient id="sph2" cx=".68" cy=".34" r=".7"><stop offset="0" stop-color="#0ea4dc"/><stop offset=".55" stop-color="#0c98ce"/><stop offset="1" stop-color="#0a7fae"/></radialGradient>
<filter id="sblur" x="-50%" y="-50%" width="200%" height="200%"><feGaussianBlur stdDeviation="5"/></filter>
</defs>
<!-- top tool icons -->
<g fill="none" stroke="#1a8fc6" stroke-width="1.5">
<path d="M1611,229 L1652,227 L1652,270 L1611,267Z" stroke-width="2"/>
<path d="M1616.9,228.7 L1616.9,267.4 M1622.7,228.4 L1622.7,267.9 M1628.6,228.1 L1628.6,268.3 M1634.4,227.9 L1634.4,268.7 M1640.3,227.6 L1640.3,269.1 M1646.1,227.3 L1646.1,269.6 M1611,234.4 L1652,233.1 M1611,239.9 L1652,239.3 M1611,245.3 L1652,245.4 M1611,250.7 L1652,251.6 M1611,256.1 L1652,257.7 M1611,261.6 L1652,263.9" stroke-width="1"/>
<path d="M1727,230 L1736,229 L1739,257 L1769,260 L1768,271 L1730,267Z" stroke-width="2"/>
<path d="M1736.300,236 H1732.500 M1737,242 H1732 M1737.500,248 H1733.500 M1738.300,254 H1733 M1744,258 V263 M1750,259 V263 M1756,259.500 V265 M1762,260 V264" stroke-width="1.1"/>
<path d="M1850,229 H1874 Q1879,229 1879,234 V257 Q1879,262 1874,262 H1869 L1861,271 L1855,262 H1850 Q1845,262 1845,257 V234 Q1845,229 1850,229Z" stroke-width="2.2" stroke-linejoin="round"/>
<path d="M1854,239.500 L1869,238.500 M1854,244.500 L1869,243.500 M1854,249.500 L1869,248.500 M1854,253.500 L1864,254" stroke-width="1.1"/>
</g>
<line x1="1575" y1="309.500" x2="1920" y2="309.500" stroke="#e0e1e7"/>
<rect x="1582.500" y="318.500" width="330" height="75" rx="3" fill="#f3f3f6" stroke="#e2e3ea"/>
<path d="M1878,353 H1891 L1884.500,360Z" fill="#111"/>
<line x1="1582" y1="408.500" x2="1913" y2="408.500" stroke="#e0e1e7"/>
<rect x="1904" y="409" width="9.500" height="132" rx="4.700" fill="#c1c1c1"/>

<!-- Box hole -->
<g stroke="#7c818c" stroke-width="1.4" stroke-linejoin="round">
<polygon points="1621,471 1649,441 1713,453 1692,484" fill="url(#stripe)"/>
<polygon points="1621,471 1692,484 1693,545 1626,532" fill="url(#stripe2)"/>
<polygon points="1692,484 1713,453 1711,511 1693,545" fill="url(#stripe3)"/>
</g>
<!-- Cylinder hole -->
<ellipse cx="1825" cy="500" rx="45" ry="42" fill="#c8c8cc" opacity=".35" filter="url(#sblur)"/>
<g stroke="#7c818c" stroke-width="1.4">
<path d="M1788.5,462 V517 Q1790,536 1825,539 Q1860,536 1861.5,517 V462Z" fill="url(#stripe3)"/>
<path d="M1788.5,462 V517 Q1790,536 1825,539 Q1860,536 1861.5,517 V462Z" fill="url(#cylh)" stroke="none"/>
<ellipse cx="1825" cy="462" rx="36.5" ry="18.5" fill="url(#stripe)"/>
</g>
<!-- Red box -->
<g stroke="#8c0f1d" stroke-width="1.700" stroke-linejoin="round">
<polygon points="1621,662 1649,631 1713,643 1692,674" fill="#cf1b2a"/>
<polygon points="1621,662 1692,674 1693,735 1626,722" fill="#aa1521"/>
<polygon points="1692,674 1713,643 1711,701 1693,735" fill="#be1927"/>
</g>
<!-- Orange cylinder -->
<ellipse cx="1825" cy="690" rx="45" ry="42" fill="#c8c8cc" opacity=".35" filter="url(#sblur)"/>
<g stroke="#8a4910" stroke-width="1.600">
<path d="M1788.5,652 V707 Q1790,726 1825,729 Q1860,726 1861.5,707 V652Z" fill="url(#cylo)"/>
<ellipse cx="1825" cy="652" rx="36.5" ry="18.5" fill="#d8741d"/>
</g>
<!-- Sphere -->
<ellipse cx="1669" cy="874" rx="45" ry="44" fill="#c8c8cc" opacity=".4" filter="url(#sblur)"/>
<circle cx="1669" cy="871.500" r="35" fill="url(#sph2)"/>
<!-- Scribble -->
<g transform="translate(1600,820) scale(.15625)" stroke="#7c9db6" stroke-width="5" stroke-linejoin="round">
<path d="M1585,225 L1590,380 L1632,410 L1640,225Z" fill="#8fb3ce"/>
<ellipse cx="1612" cy="218" rx="29" ry="24" fill="#a9cde6"/>
<path d="M1215,310 L1230,510 Q1255,535 1282,510 L1292,330Z" fill="#8db1cc"/>
<path d="M1290,330 L1298,470 L1330,560 Q1372,592 1416,560 L1422,380 Q1402,330 1380,300 Q1330,296 1290,330Z" fill="#85a8c3"/>
<path d="M1420,300 L1420,480 L1540,612 Q1590,652 1620,622 L1632,418 Q1560,440 1500,350Z" fill="#7fa2bd"/>
<path d="M1215,310 Q1208,265 1260,250 Q1300,245 1330,272 Q1350,202 1400,190 Q1450,195 1475,282 Q1500,352 1530,350 Q1520,252 1535,202 Q1550,163 1582,170 L1592,200 Q1570,232 1575,300 Q1582,372 1628,420 Q1620,452 1590,446 Q1510,440 1450,332 Q1430,272 1405,256 Q1385,272 1380,322 Q1375,347 1345,346 Q1320,340 1300,316 Q1280,306 1270,332 Q1240,346 1215,310Z" fill="#a6cbe4"/>
</g>
</svg>
<div class="lbl" style="left:-13px;top:70px">Workplane</div>
<div class="lbl" style="left:102px;top:70px">Ruler</div>
<div class="lbl" style="left:217px;top:70px">Notes</div>
<div class="abs" style="left:20px;top:119px;font-size:14px;line-height:18px;color:#3a4a62;letter-spacing:.2px">Tinkercad</div>
<div class="abs" style="left:20px;top:145px;font-size:18.6px;line-height:24px;color:#3a4a62;letter-spacing:.25px">Basic Shapes</div>
<div class="slbl" style="left:24px;top:343px">Box</div>
<div class="slbl" style="left:180px;top:343px">Cylinder</div>
<div class="slbl" style="left:24px;top:533px">Box</div>
<div class="slbl" style="left:180px;top:533px">Cylinder</div>
<div class="slbl" style="left:24px;top:724px">Sphere</div>
<div class="slbl" style="left:180px;top:724px">Scribble</div>
<!-- collapse handle -->
<div class="abs" style="left:-12px;top:346px;width:20px;height:59px;background:#f3f4f7;border:1px solid #dde1e8;border-right:none"></div>
<svg class="abs" style="left:-9px;top:358px" width="16" height="34" viewBox="0 0 16 34"><path d="M4,4.500 L12.300,18.300 L4,31.600" fill="none" stroke="#0a0a0a" stroke-width="2.400"/></svg>

</div>

<!-- DOWNLOADS -->
<div id="dl" class="abs">
<!-- word icon -->
<svg class="abs" style="left:22px;top:22px" width="24" height="24" viewBox="0 0 24 24"><path d="M8,1.500 H19 L22.500,5 V22 H8Z" fill="#fff" stroke="#9aa0a6" stroke-width=".9"/><path d="M14,7 H20 M14,10.500 H20 M14,14 H20 M14,17.500 H20" stroke="#3b73c7" stroke-width="1.100"/><rect x="1" y="5" width="13.500" height="14" rx="1" fill="#2b5fb5"/><text x="7.700" y="16" font-family="Liberation Sans,sans-serif" font-weight="700" font-size="10.500" fill="#fff" text-anchor="middle">W</text></svg>
<div class="dlt" style="left:66px">tf55635225_win32.dotx</div>
<svg class="abs" style="left:259px;top:28px" width="14" height="10" viewBox="0 0 14 10"><path d="M2,8 L7,2.500 L12,8" fill="none" stroke="#5f6368" stroke-width="1.800"/></svg>
<div class="dsep" style="left:295px"></div>
<!-- gif file icon -->
<svg class="abs" style="left:317px;top:24px" width="16" height="20" viewBox="0 0 16 20"><path d="M1.500,1 H10.500 L14.500,5 V18.500 H1.500Z" fill="#fff" stroke="#8a9096" stroke-width="1"/><path d="M10.500,1 V5 H14.500" fill="none" stroke="#8a9096" stroke-width="1"/><rect x="4" y="7" width="8" height="7.500" fill="#2d6fd6"/><path d="M4,14.500 L7,10.500 L9,12.500 L10.500,11 L12,14.500Z" fill="#9cc3f5"/></svg>
<div class="dlt" style="left:396px">cupcakes.gif</div>
<svg class="abs" style="left:551px;top:28px" width="14" height="10" viewBox="0 0 14 10"><path d="M2,8 L7,2.500 L12,8" fill="none" stroke="#5f6368" stroke-width="1.800"/></svg>
<div class="dsep" style="left:586px"></div>
<div class="abs" style="left:1778px;top:15px;width:98px;height:39px;border:1px solid #dadce0;border-radius:4px;color:#1a73e8;font-size:15.500px;line-height:37px;text-align:center;-webkit-text-stroke:.3px #1a73e8">Show all</div>
<svg class="abs" style="left:1890px;top:28px" width="14" height="14" viewBox="0 0 14 14"><path d="M1.500,1.500 L12.500,12.500 M12.500,1.500 L1.500,12.500" stroke="#4a4d51" stroke-width="2" fill="none"/></svg>

</div>

<!-- TASKBAR -->
<div id="tb" class="abs">
<!-- start -->
<svg class="abs" style="left:20px;top:15px" width="21" height="21" viewBox="0 0 21 21" fill="#fff"><path d="M0,3 L8.500,1.800 V9.800 H0Z M9.700,1.600 L21,0 V9.800 H9.700Z M0,11 H8.500 V19.200 L0,18Z M9.700,11 H21 V21 L9.700,19.400Z"/></svg>
<div id="search" class="abs"><svg class="abs" style="left:13px;top:13px" width="24" height="24" viewBox="0 0 24 24"><circle cx="14.500" cy="9.500" r="6.800" fill="none" stroke="#222" stroke-width="1.700"/><path d="M9.700,14.300 L2,22" stroke="#222" stroke-width="1.900"/></svg><span>Type here to search</span></div>
<!-- cortana -->
<svg class="abs" style="left:508px;top:14px" width="22" height="22" viewBox="0 0 22 22"><circle cx="11" cy="11" r="8.700" fill="none" stroke="#fff" stroke-width="2.400"/></svg>
<!-- task view -->
<svg class="abs" style="left:568px;top:13px" width="24" height="24" viewBox="0 0 24 24" fill="none" stroke="#fff" stroke-width="1.500"><rect x="3.500" y="6" width="12" height="11"/><path d="M3.500,3 V1.500 H15.500 V3 M3.500,20 V21.500 H15.500 V20 M19.500,2 V8 M19.500,10 V16 M19.500,18 V22" /></svg>
<!-- explorer -->
<svg class="abs" style="left:628px;top:11px" width="30" height="28" viewBox="0 0 30 28"><path d="M1,4 Q1,2.500 2.500,2.500 H11 L13.500,5.500 H27.500 Q29,5.500 29,7 V10 H1Z" fill="#e8a82a"/><rect x="1" y="8" width="28" height="17" rx="1" fill="#fbd25a"/><rect x="1" y="14" width="28" height="11" fill="#f5c13d"/><rect x="9" y="17" width="12" height="8" fill="#3b8edb"/><rect x="11.500" y="20" width="7" height="5" fill="#fbd25a"/></svg>
<!-- store -->
<svg class="abs" style="left:691px;top:9px" width="28" height="32" viewBox="0 0 28 32"><path d="M9,9 V6.500 Q9,2 14,2 Q19,2 19,6.500 V9" fill="none" stroke="#f2f2f2" stroke-width="1.800"/><path d="M1.500,8.500 H26.500 V28 Q26.500,30 24.500,30 H3.500 Q1.500,30 1.500,28Z" fill="#f4f4f4"/><rect x="8.500" y="13.500" width="5" height="5" fill="#f25022"/><rect x="14.500" y="13.500" width="5" height="5" fill="#7fba00"/><rect x="8.500" y="19.500" width="5" height="5" fill="#00a4ef"/><rect x="14.500" y="19.500" width="5" height="5" fill="#ffb900"/></svg>
<!-- steam -->
<svg class="abs" style="left:753px;top:10px" width="30" height="30" viewBox="0 0 30 30"><defs><linearGradient id="stg" x1="0" y1="0" x2="0" y2="1"><stop offset="0" stop-color="#15315c"/><stop offset="1" stop-color="#1a86bf"/></linearGradient></defs><circle cx="15" cy="15" r="14.500" fill="url(#stg)"/><path d="M0.800,17.500 L9,21 Q10.500,19.600 12.500,19.800 L16.500,14.200 Q16.500,9.800 21,9.600 Q25.500,9.800 25.600,14.300 Q25.400,18.700 21,18.900 L15.500,22.800 Q15.200,26.500 11.700,26.700 Q8.700,26.600 8,24 L1.500,21.200Z" fill="#fff"/><circle cx="21" cy="14.200" r="2.900" fill="#1a5e95"/><circle cx="11.800" cy="23.200" r="2.300" fill="#1a76ad"/></svg>
<!-- predator -->
<svg class="abs" style="left:814px;top:8px" width="32" height="34" viewBox="0 0 32 34"><rect x="1" y="1" width="30" height="32" fill="#111418"/><path d="M16,4 L20,9 L19,20 L16,30 L13,20 L12,9Z" fill="#5a6066"/><path d="M6,5 Q4,14 9,24 L11,29 L11,17 Q8,10 9,5Z M26,5 Q28,14 23,24 L21,29 L21,17 Q24,10 23,5Z" fill="#2ec0e8"/><path d="M12,9 L16,14 L20,9 L18.500,19 L16,23 L13.500,19Z" fill="#8a9096"/></svg>
<!-- mail -->
<svg class="abs" style="left:876px;top:11px" width="32" height="28" viewBox="0 0 32 28"><path d="M1,12 L16,1 L31,12 V27 H1Z" fill="#1679d4"/><path d="M3,11 H29 V22 H3Z" fill="#f4f8fc"/><path d="M1,12 L16,21 L31,12 V27 H1Z" fill="#2b96ea"/><path d="M1,27 L13,18.500 M31,27 L19,18.500" stroke="#1470c4" stroke-width="1"/></svg>
<!-- chrome (active) -->
<div class="abs" style="left:924px;top:0;width:61px;height:50px;background:#4d4845"></div>
<div class="abs" style="left:924px;top:47px;width:61px;height:3px;background:#76b9ed"></div>
<svg class="abs" style="left:940px;top:11px" width="28" height="28" viewBox="0 0 28 28"><circle cx="14" cy="14" r="13.500" fill="#fff"/><path d="M14,0.500 A13.500,13.500 0 0 1 25.700,7.250 H14 A6.750,6.750 0 0 0 8.150,10.600 L2.300,7.250 A13.500,13.500 0 0 1 14,0.500Z" fill="#ea4335"/><path d="M2.300,7.250 L8.150,17.400 A6.750,6.750 0 0 0 14,20.750 L9.500,26.700 A13.500,13.500 0 0 1 2.300,7.250Z" fill="#34a853"/><path d="M25.700,7.250 A13.500,13.500 0 0 1 9.500,26.700 L19.850,17.400 A6.750,6.750 0 0 0 19.850,10.600 L14,7.250Z" fill="#fbbc05"/><path d="M14,7.250 H25.700 A13.500,13.500 0 0 1 14,27.500 L9.500,26.700 L19.850,17.400Z" fill="#fbbc05"/><circle cx="14" cy="14" r="6.300" fill="#fff"/><circle cx="14" cy="14" r="5" fill="#4285f4"/></svg>
<!-- fusion 360 -->
<svg class="abs" style="left:1001px;top:10px" width="30" height="30" viewBox="0 0 30 30"><defs><linearGradient id="fug" x1="0" y1="0" x2="1" y2="1"><stop offset="0" stop-color="#f7d9a8"/><stop offset="1" stop-color="#e8a24a"/></linearGradient></defs><rect x=".5" y=".5" width="29" height="29" fill="url(#fug)" stroke="#f3e6cf"/><path d="M9,5 H22 V10.500 H15 V13.500 H20 V18.500 H15 V25 H9Z" fill="#e8731a"/><path d="M9,5 H12 V25 H9Z" fill="#c45a10"/><text x="21" y="27" font-family="Liberation Sans,sans-serif" font-size="5" fill="#8a5a1a" text-anchor="middle">360</text></svg>
<!-- arduino -->
<svg class="abs" style="left:1064px;top:11px" width="28" height="28" viewBox="0 0 28 28"><circle cx="14" cy="14" r="13.500" fill="#0c969b"/><path d="M14,14 Q11,9.500 7.800,9.500 Q4,9.800 4,14 Q4,18.200 7.800,18.500 Q11,18.500 14,14 Q17,9.500 20.200,9.500 Q24,9.800 24,14 Q24,18.200 20.200,18.500 Q17,18.500 14,14Z" fill="none" stroke="#fff" stroke-width="2.200"/><path d="M6.300,14 H9.700 M18.500,14 H22 M20.250,12.300 V15.700" stroke="#fff" stroke-width="1.200"/></svg>
<!-- zoom -->
<svg class="abs" style="left:1125px;top:10px" width="30" height="30" viewBox="0 0 30 30"><rect x=".5" y=".5" width="29" height="29" rx="8" fill="#2d8cff"/><rect x="6" y="10" width="12.500" height="10" rx="2.200" fill="#fff"/><path d="M19.500,13.500 L24.500,10 V20 L19.500,16.500Z" fill="#fff"/></svg>
<!-- tray -->
<svg class="abs" style="left:1508px;top:13px" width="30" height="26" viewBox="0 0 30 26" fill="none" stroke="#fff" stroke-width="1.500"><path d="M6.500,16.300 L14.200,8.200 L22,16.300"/></svg>
<svg class="abs" style="left:1540px;top:6px" width="180" height="38" viewBox="0 0 1920 405" fill="none" stroke="#fff" stroke-width="11" stroke-linejoin="round">
<rect x="70" y="157" width="95" height="88" rx="12"/><path d="M165,188 L210,162 V240 L165,214"/><path d="M78,126 Q130,96 182,126 M78,277 Q130,306 182,277" stroke-width="9"/>
<g stroke="none"><path d="M372,263 Q340,256 342,216 Q350,186 386,186 Q402,140 452,135 Q496,135 512,176 Q551,181 553,222 Q550,259 520,263Z" fill="#fff"/><path d="M386,186 Q402,140 452,135 Q496,135 512,176 L452,222Z" fill="#a3a3a3"/><path d="M343,214 Q350,186 386,186 L475,228 L352,246Z" fill="#cfcfcf"/></g>
<path d="M678,133 V160 M700,133 V160" stroke-width="8"/><path d="M668,162 H710 V180 Q710,198 689,198 Q668,198 668,180Z" stroke-width="8" fill="#fff"/><path d="M689,198 V262 H715" stroke-width="8"/>
<rect x="716" y="156" width="148" height="106" stroke-width="10"/><rect x="735" y="175" width="110" height="68" fill="#fff" stroke="none"/><path d="M876,190 V228" stroke-width="10"/>
<circle cx="1158" cy="272" r="14" fill="#fff" stroke="none"/><path d="M1105,282 A55,55 0 0 1 1168,226 M1060,282 A100,100 0 0 1 1170,181 M1015,282 A145,145 0 0 1 1172,136" stroke-width="10"/>
<path d="M1305,170 H1335 L1370,132 V274 L1335,236 H1305Z" stroke-width="9"/><path d="M1408,180 Q1432,206 1408,232 M1445,146 Q1497,206 1445,266 M1480,110 Q1552,206 1480,302" stroke-width="8.500"/>
<g fill="#fff" stroke="none"><path d="M1672,120 L1722,150 L1672,180 L1622,150Z M1775,120 L1825,150 L1775,180 L1725,150Z M1672,182 L1722,212 L1672,242 L1622,212Z M1775,182 L1825,212 L1775,242 L1725,212Z M1724,222 L1764,248 L1724,274 L1684,248Z"/></g>
<rect x="1622" y="195" width="113" height="113" rx="12" fill="#e0001b" stroke="none"/>
<text x="1678" y="287" font-family="Liberation Sans,sans-serif" font-weight="700" font-size="98" fill="#fff" stroke="none" text-anchor="middle">3</text>
</svg>
<div class="tray" style="left:1720px;top:16px;width:40px;font-size:15.200px;transform:scaleX(.86)">ENG</div>
<div class="tray" style="left:1768px;top:5px;width:80px;font-size:15.300px;transform:scaleX(.9)">16:46</div>
<div class="tray" style="left:1758px;top:27.500px;width:100px;font-size:15.300px;transform:scaleX(.98)">26/03/2021</div>
<svg class="abs" style="left:1866px;top:11px" width="36" height="34" viewBox="0 0 36 34"><path d="M3,4 H23 V19.500 H10 L6,23.500 V19.500 H3Z" fill="#fff"/><path d="M6.500,8 H19.500 M6.500,11.500 H19.500 M6.500,15 H15" stroke="#2a2320" stroke-width="1.300"/><circle cx="22.500" cy="22.500" r="9" fill="#2a2320" stroke="#cfcfcf" stroke-width="1.300"/><text x="22.500" y="27.500" font-family="Liberation Sans,sans-serif" font-size="13.500" fill="#fff" text-anchor="middle">4</text></svg>
<div class="abs" style="left:1914px;top:0;width:1px;height:50px;background:#8a8684"></div>

</div>

</div>
</body>
</html>
